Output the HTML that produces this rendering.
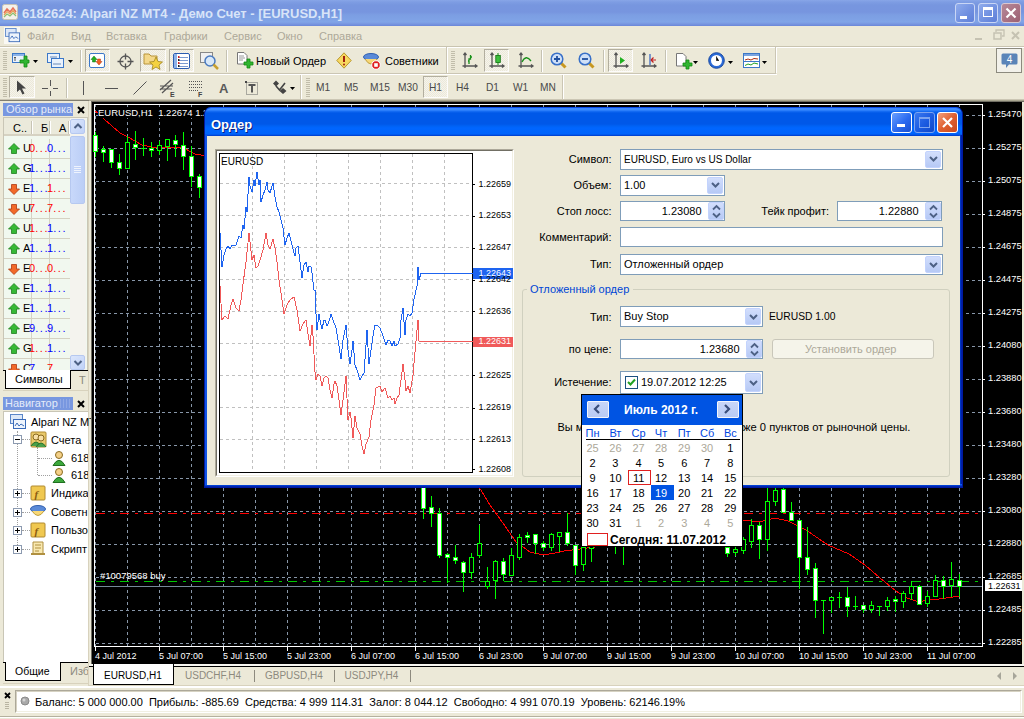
<!DOCTYPE html><html><head><meta charset="utf-8"><style>
html,body{margin:0;padding:0;}
body{width:1024px;height:719px;overflow:hidden;position:relative;background:#ECE9D8;font-family:"Liberation Sans", sans-serif;}
.t{position:absolute;white-space:nowrap;}
.b{position:absolute;box-sizing:border-box;}
svg{position:absolute;overflow:visible;}
</style></head><body>

<div class="b" style="left:0;top:0;width:1024px;height:26px;background:linear-gradient(180deg,#88A6E8 0px,#7E9DE3 2px,#7796DF 5px,#7795DF 12px,#7C9EE3 15px,#80A4E7 22px,#7896E0 24px,#6A86D8 26px);"></div>
<svg style="left:2px;top:4px" width="16" height="16" viewBox="0 0 16 16"><rect x="0.5" y="0.5" width="15" height="15" rx="2" fill="#F4F1EA" stroke="#C9C3B6"/><path d="M2 9 L5 5 L8 8 L11 4 L14 8" stroke="#E87058" stroke-width="1.5" fill="none"/><path d="M2 11 L5 7.5 L8 10 L11 6.5 L14 10" stroke="#E8A058" stroke-width="1.2" fill="none"/><path d="M2 13 L5 10 L8 12 L11 9 L14 12" stroke="#8CC070" stroke-width="1.2" fill="none"/></svg>
<div class="t" style="left:22px;top:5.0px;font-size:13px;line-height:17px;color:#D8E4F8;font-weight:700;">6182624: Alpari NZ MT4 - Демо Счет - [EURUSD,H1]</div>
<div class="b" style="left:955px;top:3px;width:20px;height:20px;border:1px solid #C9D6F5;border-radius:3px;background:linear-gradient(135deg,#90ACEC,#6F8FE0 60%,#5E7FD8);"></div>
<div class="b" style="left:960px;top:16px;width:7px;height:3px;background:#FFF;"></div>
<div class="b" style="left:978px;top:3px;width:20px;height:20px;border:1px solid #C9D6F5;border-radius:3px;background:linear-gradient(135deg,#90ACEC,#6F8FE0 60%,#5E7FD8);"></div>
<div class="b" style="left:983px;top:7px;width:10px;height:10px;border:1px solid #FFF;border-top:3px solid #FFF;"></div>
<div class="b" style="left:1001px;top:3px;width:20px;height:20px;border:1px solid #D9C8D2;border-radius:3px;background:linear-gradient(135deg,#B58A9A,#A87082 60%,#9A6072);"></div>
<svg style="left:1001px;top:3px" width="20" height="20"><path d="M5.5 5.5 L14.5 14.5 M14.5 5.5 L5.5 14.5" stroke="#FFF" stroke-width="2.2"/></svg>
<div class="b" style="left:4px;top:27px;width:16px;height:17px;background:#FAF9F4;"></div>
<svg style="left:5px;top:28px" width="16" height="15" viewBox="0 0 18 17"><rect x="0.5" y="0.5" width="12" height="9" fill="#DDE8F8" stroke="#5A86C8"/><rect x="4.5" y="5.5" width="12" height="10" fill="#EEF4FC" stroke="#3A6AB8"/><path d="M6 12 L8 9 L10 12 L12 10 L15 12" stroke="#3A6AB8" fill="none"/></svg>
<div class="t" style="left:27px;top:28.5px;font-size:11px;line-height:15px;color:#ACA899;font-weight:400;">Файл</div>
<div class="t" style="left:71px;top:28.5px;font-size:11px;line-height:15px;color:#ACA899;font-weight:400;">Вид</div>
<div class="t" style="left:106px;top:28.5px;font-size:11px;line-height:15px;color:#ACA899;font-weight:400;">Вставка</div>
<div class="t" style="left:164px;top:28.5px;font-size:11px;line-height:15px;color:#ACA899;font-weight:400;">Графики</div>
<div class="t" style="left:224px;top:28.5px;font-size:11px;line-height:15px;color:#ACA899;font-weight:400;">Сервис</div>
<div class="t" style="left:277px;top:28.5px;font-size:11px;line-height:15px;color:#ACA899;font-weight:400;">Окно</div>
<div class="t" style="left:319px;top:28.5px;font-size:11px;line-height:15px;color:#ACA899;font-weight:400;">Справка</div>
<svg style="left:970px;top:27px" width="54" height="18"><path d="M5 12 H12" stroke="#C5C2B2" stroke-width="2"/><rect x="24" y="6" width="7" height="6" fill="none" stroke="#C5C2B2" stroke-width="1.5"/><path d="M26 5 V3 H34 V9 H32" fill="none" stroke="#C5C2B2" stroke-width="1.3"/><path d="M42 5 L49 12 M49 5 L42 12" stroke="#C5C2B2" stroke-width="2"/></svg>
<div class="b" style="left:0px;top:46px;width:1024px;height:1px;background:#C9C4B0;"></div>
<div class="b" style="left:0px;top:47px;width:1024px;height:1px;background:#FFFFFF;"></div>
<div class="b" style="left:0px;top:73px;width:776px;height:1px;background:#CBC6B4;"></div>
<div class="b" style="left:0px;top:74px;width:777px;height:1px;background:#FFFFFF;"></div>
<div class="b" style="left:446px;top:47px;width:1px;height:26px;background:#CBC6B4;"></div>
<div class="b" style="left:447px;top:47px;width:1px;height:26px;background:#FFFFFF;"></div>
<div class="b" style="left:775px;top:47px;width:1px;height:26px;background:#CBC6B4;"></div>
<div class="b" style="left:776px;top:47px;width:1px;height:26px;background:#FFFFFF;"></div>
<div class="b" style="left:0px;top:99px;width:1024px;height:1px;background:#CBC6B4;"></div>
<div class="b" style="left:300px;top:75px;width:1px;height:24px;background:#CBC6B4;"></div>
<div class="b" style="left:301px;top:75px;width:1px;height:24px;background:#FFFFFF;"></div>
<div class="b" style="left:562px;top:75px;width:1px;height:24px;background:#CBC6B4;"></div>
<div class="b" style="left:563px;top:75px;width:1px;height:24px;background:#FFFFFF;"></div>
<div class="b" style="left:3px;top:51px;width:4px;height:1px;background:#C1BDAA;"></div><div class="b" style="left:3px;top:53px;width:4px;height:1px;background:#C1BDAA;"></div><div class="b" style="left:3px;top:55px;width:4px;height:1px;background:#C1BDAA;"></div><div class="b" style="left:3px;top:57px;width:4px;height:1px;background:#C1BDAA;"></div><div class="b" style="left:3px;top:59px;width:4px;height:1px;background:#C1BDAA;"></div><div class="b" style="left:3px;top:61px;width:4px;height:1px;background:#C1BDAA;"></div><div class="b" style="left:3px;top:63px;width:4px;height:1px;background:#C1BDAA;"></div><div class="b" style="left:3px;top:65px;width:4px;height:1px;background:#C1BDAA;"></div><div class="b" style="left:3px;top:67px;width:4px;height:1px;background:#C1BDAA;"></div><div class="b" style="left:3px;top:69px;width:4px;height:1px;background:#C1BDAA;"></div>
<div class="b" style="left:451px;top:51px;width:4px;height:1px;background:#C1BDAA;"></div><div class="b" style="left:451px;top:53px;width:4px;height:1px;background:#C1BDAA;"></div><div class="b" style="left:451px;top:55px;width:4px;height:1px;background:#C1BDAA;"></div><div class="b" style="left:451px;top:57px;width:4px;height:1px;background:#C1BDAA;"></div><div class="b" style="left:451px;top:59px;width:4px;height:1px;background:#C1BDAA;"></div><div class="b" style="left:451px;top:61px;width:4px;height:1px;background:#C1BDAA;"></div><div class="b" style="left:451px;top:63px;width:4px;height:1px;background:#C1BDAA;"></div><div class="b" style="left:451px;top:65px;width:4px;height:1px;background:#C1BDAA;"></div><div class="b" style="left:451px;top:67px;width:4px;height:1px;background:#C1BDAA;"></div><div class="b" style="left:451px;top:69px;width:4px;height:1px;background:#C1BDAA;"></div>
<div class="b" style="left:3px;top:78px;width:4px;height:1px;background:#C1BDAA;"></div><div class="b" style="left:3px;top:80px;width:4px;height:1px;background:#C1BDAA;"></div><div class="b" style="left:3px;top:82px;width:4px;height:1px;background:#C1BDAA;"></div><div class="b" style="left:3px;top:84px;width:4px;height:1px;background:#C1BDAA;"></div><div class="b" style="left:3px;top:86px;width:4px;height:1px;background:#C1BDAA;"></div><div class="b" style="left:3px;top:88px;width:4px;height:1px;background:#C1BDAA;"></div><div class="b" style="left:3px;top:90px;width:4px;height:1px;background:#C1BDAA;"></div><div class="b" style="left:3px;top:92px;width:4px;height:1px;background:#C1BDAA;"></div><div class="b" style="left:3px;top:94px;width:4px;height:1px;background:#C1BDAA;"></div><div class="b" style="left:3px;top:96px;width:4px;height:1px;background:#C1BDAA;"></div>
<div class="b" style="left:306px;top:78px;width:4px;height:1px;background:#C1BDAA;"></div><div class="b" style="left:306px;top:80px;width:4px;height:1px;background:#C1BDAA;"></div><div class="b" style="left:306px;top:82px;width:4px;height:1px;background:#C1BDAA;"></div><div class="b" style="left:306px;top:84px;width:4px;height:1px;background:#C1BDAA;"></div><div class="b" style="left:306px;top:86px;width:4px;height:1px;background:#C1BDAA;"></div><div class="b" style="left:306px;top:88px;width:4px;height:1px;background:#C1BDAA;"></div><div class="b" style="left:306px;top:90px;width:4px;height:1px;background:#C1BDAA;"></div><div class="b" style="left:306px;top:92px;width:4px;height:1px;background:#C1BDAA;"></div><div class="b" style="left:306px;top:94px;width:4px;height:1px;background:#C1BDAA;"></div><div class="b" style="left:306px;top:96px;width:4px;height:1px;background:#C1BDAA;"></div>
<svg style="left:12px;top:53px" width="18" height="15" viewBox="0 0 18 15"><rect x="0.5" y="0.5" width="12" height="9" fill="#EAF2FC" stroke="#3C78C8"/><rect x="1" y="1" width="11" height="2" fill="#8DB4E8"/><path d="M3 4 V8 M2 5 L3 4 L4 5" stroke="#555" fill="none"/><path d="M9 6 h4 v-4 h3 v4 h2 v3 h-2 v4 h-3 v-4 h-4 z" transform="translate(-1,1)" fill="#31B531" stroke="#138A13" stroke-width="0.8"/></svg>
<svg style="left:33px;top:60px" width="6" height="4"><path d="M0 0 H5 L2.5 3 Z" fill="#000"/></svg>
<svg style="left:47px;top:53px" width="18" height="15" viewBox="0 0 18 15"><rect x="0.5" y="0.5" width="12" height="9" fill="#EAF2FC" stroke="#3C78C8"/><rect x="4.5" y="5.5" width="12" height="9" fill="#EAF2FC" stroke="#3C78C8"/><path d="M3 4 H10 M6 11 H14" stroke="#6A8AB8" fill="none"/></svg>
<svg style="left:68px;top:60px" width="6" height="4"><path d="M0 0 H5 L2.5 3 Z" fill="#000"/></svg>
<div class="b" style="left:80px;top:50px;width:1px;height:22px;background:#C5C2B2;"></div><div class="b" style="left:81px;top:50px;width:1px;height:22px;background:#FFF;"></div>
<div class="b" style="left:85px;top:49px;width:25px;height:23px;border:1px solid;border-color:#ACA899 #FFFFFF #FFFFFF #ACA899;background-color:#F6F5F0;background-image:linear-gradient(45deg,#ECE9D8 25%,transparent 25%,transparent 75%,#ECE9D8 75%),linear-gradient(45deg,#ECE9D8 25%,transparent 25%,transparent 75%,#ECE9D8 75%);background-size:2px 2px;background-position:0 0,1px 1px;opacity:0.9"></div>
<svg style="left:89px;top:53px" width="16" height="15" viewBox="0 0 16 15"><rect x="0.5" y="0.5" width="15" height="14" rx="1.5" fill="#FFF" stroke="#3C78C8"/><path d="M5 3 L8 6.5 H6.5 V9 H3.5 V6.5 H2 Z" fill="#20B020" stroke="#107010" stroke-width="0.5"/><path d="M10 12 L13 8.5 H11.5 V6 H8.5 V8.5 H7 Z" fill="#F06020" stroke="#B03010" stroke-width="0.5"/></svg>
<svg style="left:117px;top:53px" width="17" height="17" viewBox="0 0 17 17"><circle cx="8.5" cy="8.5" r="5.5" fill="none" stroke="#555" stroke-width="1.3"/><path d="M8.5 0.5 V6.5 M8.5 10.5 V16.5 M0.5 8.5 H6.5 M10.5 8.5 H16.5" stroke="#555" stroke-width="1.3"/></svg>
<div class="b" style="left:140px;top:49px;width:26px;height:23px;border:1px solid;border-color:#ACA899 #FFFFFF #FFFFFF #ACA899;background-color:#F6F5F0;background-image:linear-gradient(45deg,#ECE9D8 25%,transparent 25%,transparent 75%,#ECE9D8 75%),linear-gradient(45deg,#ECE9D8 25%,transparent 25%,transparent 75%,#ECE9D8 75%);background-size:2px 2px;background-position:0 0,1px 1px;opacity:0.9"></div>
<svg style="left:143px;top:51px" width="20" height="19" viewBox="0 0 20 19"><path d="M1 3 H6 L8 5 H14 V13 H1 Z" fill="#F4D88A" stroke="#B8943A"/><path d="M13 6 L15 10.5 L19.5 11 L16 14 L17 18.5 L13 16 L9 18.5 L10 14 L6.5 11 L11 10.5 Z" fill="#F4D240" stroke="#A08420" stroke-width="0.8"/></svg>
<div class="b" style="left:169px;top:49px;width:25px;height:23px;border:1px solid;border-color:#ACA899 #FFFFFF #FFFFFF #ACA899;background-color:#F6F5F0;background-image:linear-gradient(45deg,#ECE9D8 25%,transparent 25%,transparent 75%,#ECE9D8 75%),linear-gradient(45deg,#ECE9D8 25%,transparent 25%,transparent 75%,#ECE9D8 75%);background-size:2px 2px;background-position:0 0,1px 1px;opacity:0.9"></div>
<svg style="left:173px;top:53px" width="17" height="16" viewBox="0 0 17 16"><rect x="0.5" y="0.5" width="16" height="15" rx="1.5" fill="#FFF" stroke="#2A5CB0"/><rect x="1" y="1" width="3" height="14" fill="#8EB2E8"/><path d="M6 4.5 H15 M6 7.5 H15 M6 10.5 H15 M6 13.5 H15" stroke="#7A9AD0"/><rect x="5" y="3" width="1.5" height="2" fill="#D02020"/><rect x="5" y="9" width="1.5" height="2" fill="#D02020"/><rect x="5" y="6" width="1.5" height="2" fill="#202020"/><rect x="5" y="12" width="1.5" height="2" fill="#202020"/></svg>
<svg style="left:200px;top:52px" width="20" height="18" viewBox="0 0 20 18"><rect x="0.5" y="0.5" width="12" height="10" fill="#F0F0F0" stroke="#888"/><circle cx="10" cy="9" r="5" fill="#D8E8F8" stroke="#4A7AC0" stroke-width="1.5"/><path d="M13.5 12.5 L18 17" stroke="#C8A030" stroke-width="2.5"/></svg>
<div class="b" style="left:226px;top:50px;width:1px;height:22px;background:#C5C2B2;"></div><div class="b" style="left:227px;top:50px;width:1px;height:22px;background:#FFF;"></div>
<svg style="left:236px;top:52px" width="17" height="18" viewBox="0 0 17 18"><path d="M1.5 0.5 H8 L11 3.5 V12 H1.5 Z" fill="#FFF" stroke="#777"/><path d="M3 4 H8 M3 6 H9 M3 8 H7" stroke="#999"/><path d="M8 10 h3 v-3 h3 v3 h3 v3 h-3 v3 h-3 v-3 h-3 z" fill="#31B531" stroke="#138A13" stroke-width="0.8"/></svg>
<div class="t" style="left:256px;top:53.5px;font-size:11px;line-height:15px;color:#000;font-weight:400;">Новый Ордер</div>
<svg style="left:336px;top:52px" width="16" height="17" viewBox="0 0 16 17"><path d="M8 0.8 L15.2 8.5 L8 16.2 L0.8 8.5 Z" fill="#F8D860" stroke="#B89830"/><path d="M8 4 V10" stroke="#A02010" stroke-width="2"/><circle cx="8" cy="12.5" r="1" fill="#A02010"/></svg>
<svg style="left:363px;top:52px" width="18" height="18" viewBox="0 0 18 18"><ellipse cx="8" cy="5" rx="7.5" ry="3.5" fill="#5A8AD8" stroke="#3060B0"/><path d="M2 7 Q8 17 14 7" fill="#F8D878" stroke="#C0A040"/><circle cx="13" cy="13" r="4.3" fill="#E02020" stroke="#FFF"/><rect x="11.2" y="11.2" width="3.6" height="3.6" fill="#FFF"/></svg>
<div class="t" style="left:385px;top:53.5px;font-size:11px;line-height:15px;color:#000;font-weight:400;">Советники</div>
<svg style="left:462px;top:52px" width="16" height="18" viewBox="0 0 16 18"><path d="M3 1 V16 M0.5 14 H15 M1.5 3 L3 1 L4.5 3 M13 12.5 L15 14 L13 15.5" stroke="#555" stroke-width="1.3" fill="none"/><path d="M7 12 V7 H8.5 V3 M6 9 H7 M8.5 5 H10" stroke="#189018" stroke-width="1.3" fill="none"/></svg>
<div class="b" style="left:484px;top:49px;width:25px;height:23px;border:1px solid;border-color:#ACA899 #FFFFFF #FFFFFF #ACA899;background-color:#F6F5F0;background-image:linear-gradient(45deg,#ECE9D8 25%,transparent 25%,transparent 75%,#ECE9D8 75%),linear-gradient(45deg,#ECE9D8 25%,transparent 25%,transparent 75%,#ECE9D8 75%);background-size:2px 2px;background-position:0 0,1px 1px;opacity:0.9"></div>
<svg style="left:489px;top:52px" width="16" height="18" viewBox="0 0 16 18"><path d="M3 1 V16 M0.5 14 H15 M1.5 3 L3 1 L4.5 3 M13 12.5 L15 14 L13 15.5" stroke="#555" stroke-width="1.3" fill="none"/><path d="M9 1 V13" stroke="#189018"/><rect x="6.8" y="3.5" width="4.5" height="7" fill="#3CC03C" stroke="#107010" stroke-width="0.8"/></svg>
<svg style="left:518px;top:52px" width="16" height="18" viewBox="0 0 16 18"><path d="M3 1 V16 M0.5 14 H15 M1.5 3 L3 1 L4.5 3 M13 12.5 L15 14 L13 15.5" stroke="#555" stroke-width="1.3" fill="none"/><path d="M4 10 Q8 2 13 9" stroke="#189018" stroke-width="1.3" fill="none"/></svg>
<div class="b" style="left:541px;top:50px;width:1px;height:22px;background:#C5C2B2;"></div><div class="b" style="left:542px;top:50px;width:1px;height:22px;background:#FFF;"></div>
<svg style="left:550px;top:52px" width="17" height="18" viewBox="0 0 17 18"><path d="M10 10 L15.5 15.5" stroke="#C89820" stroke-width="3"/><circle cx="7" cy="7" r="5.8" fill="#CFE0F8" stroke="#3870C8" stroke-width="1.5"/><path d="M4 7 H10 M7 4 V10" stroke="#2050A0" stroke-width="1.8"/></svg>
<svg style="left:578px;top:52px" width="17" height="18" viewBox="0 0 17 18"><path d="M10 10 L15.5 15.5" stroke="#C89820" stroke-width="3"/><circle cx="7" cy="7" r="5.8" fill="#CFE0F8" stroke="#3870C8" stroke-width="1.5"/><path d="M4 7 H10" stroke="#2050A0" stroke-width="1.8"/></svg>
<div class="b" style="left:603px;top:50px;width:1px;height:22px;background:#C5C2B2;"></div><div class="b" style="left:604px;top:50px;width:1px;height:22px;background:#FFF;"></div>
<div class="b" style="left:608px;top:49px;width:25px;height:23px;border:1px solid;border-color:#ACA899 #FFFFFF #FFFFFF #ACA899;background-color:#F6F5F0;background-image:linear-gradient(45deg,#ECE9D8 25%,transparent 25%,transparent 75%,#ECE9D8 75%),linear-gradient(45deg,#ECE9D8 25%,transparent 25%,transparent 75%,#ECE9D8 75%);background-size:2px 2px;background-position:0 0,1px 1px;opacity:0.9"></div>
<svg style="left:613px;top:52px" width="16" height="18" viewBox="0 0 16 18"><path d="M3 1 V16 M0.5 14 H15 M1.5 3 L3 1 L4.5 3 M13 12.5 L15 14 L13 15.5" stroke="#555" stroke-width="1.3" fill="none"/><path d="M7 5 L12 8.5 L7 12 Z" fill="#20B020"/></svg>
<svg style="left:641px;top:52px" width="16" height="18" viewBox="0 0 16 18"><path d="M3 1 V16 M0.5 14 H15 M1.5 3 L3 1 L4.5 3 M13 12.5 L15 14 L13 15.5" stroke="#555" stroke-width="1.3" fill="none"/><path d="M9 2 V13" stroke="#3060C0" stroke-width="1.2"/><path d="M10 8 L15 8 M10 8 L12.5 5.5 M10 8 L12.5 10.5" stroke="#C02020" stroke-width="1.2"/></svg>
<div class="b" style="left:665px;top:50px;width:1px;height:22px;background:#C5C2B2;"></div><div class="b" style="left:666px;top:50px;width:1px;height:22px;background:#FFF;"></div>
<svg style="left:675px;top:53px" width="18" height="18" viewBox="0 0 18 18"><path d="M1.5 0.5 H8 L11 3.5 V13 H1.5 Z" fill="#FFF" stroke="#777"/><path d="M8 10 h3 v-3 h3 v3 h3 v3 h-3 v3 h-3 v-3 h-3 z" fill="#31B531" stroke="#138A13" stroke-width="0.8"/></svg>
<svg style="left:693px;top:61px" width="6" height="4"><path d="M0 0 H5 L2.5 3 Z" fill="#000"/></svg>
<svg style="left:708px;top:52px" width="17" height="17" viewBox="0 0 17 17"><circle cx="8.5" cy="8.5" r="7.8" fill="#2A6AD8" stroke="#1A4AA0"/><circle cx="8.5" cy="8.5" r="5.5" fill="#FFF"/><path d="M8.5 4.5 V8.5 H11" stroke="#333" stroke-width="1"/></svg>
<svg style="left:728px;top:61px" width="6" height="4"><path d="M0 0 H5 L2.5 3 Z" fill="#000"/></svg>
<svg style="left:743px;top:53px" width="17" height="15" viewBox="0 0 17 15"><rect x="0.5" y="0.5" width="16" height="14" fill="#FFF" stroke="#3C78C8"/><rect x="1" y="1" width="15" height="2" fill="#7AA4E0"/><path d="M2 7 L5 6 L8 7 L11 5.5 L15 6" stroke="#B03010" fill="none"/><path d="M1 8.5 H16" stroke="#3C78C8"/><path d="M2 12.5 L5 11 L8 12 L11 10 L15 11" stroke="#20A020" fill="none"/></svg>
<svg style="left:762px;top:61px" width="6" height="4"><path d="M0 0 H5 L2.5 3 Z" fill="#000"/></svg>
<div class="b" style="left:996px;top:48px;width:26px;height:25px;border:1px solid #8C8A7E;background:#F2F1EA;"></div>
<svg style="left:1001px;top:53px" width="17" height="16" viewBox="0 0 17 16"><path d="M2 0.5 H15 Q16.5 0.5 16.5 2 V10 Q16.5 11.5 15 11.5 H8 L5 15 V11.5 H2 Q0.5 11.5 0.5 10 V2 Q0.5 0.5 2 0.5 Z" fill="#5A84B8"/><text x="8.5" y="9.5" font-size="10" font-family="Liberation Sans" fill="#FFF" text-anchor="middle">4</text></svg>
<div class="b" style="left:9px;top:76px;width:26px;height:22px;border:1px solid;border-color:#ACA899 #FFFFFF #FFFFFF #ACA899;background-color:#F6F5F0;background-image:linear-gradient(45deg,#ECE9D8 25%,transparent 25%,transparent 75%,#ECE9D8 75%),linear-gradient(45deg,#ECE9D8 25%,transparent 25%,transparent 75%,#ECE9D8 75%);background-size:2px 2px;background-position:0 0,1px 1px;opacity:0.9"></div>
<svg style="left:16px;top:80px" width="11" height="15" viewBox="0 0 11 15"><path d="M1 0.5 L1 12 L4 9.5 L6.5 14.5 L8.5 13.5 L6 8.5 L10 8.5 Z" fill="#444"/></svg>
<svg style="left:42px;top:80px" width="16" height="16"><path d="M8.5 0 V6 M8.5 11 V16 M0 8.5 H6 M11 8.5 H16" stroke="#555" stroke-width="1"/></svg>
<div class="b" style="left:66px;top:78px;width:1px;height:20px;background:#C5C2B2;"></div><div class="b" style="left:67px;top:78px;width:1px;height:20px;background:#FFF;"></div>
<div class="b" style="left:83px;top:81px;width:1px;height:14px;background:#555;"></div>
<div class="b" style="left:105px;top:88px;width:13px;height:1px;background:#555;"></div>
<svg style="left:133px;top:81px" width="14" height="14"><path d="M0.5 13.5 L13.5 0.5" stroke="#555" stroke-width="1"/></svg>
<svg style="left:159px;top:79px" width="17" height="18" viewBox="0 0 17 18"><path d="M1 11 L12 1 M3 14 L14 4 M1 7 H14 M1 10 H13" stroke="#555" stroke-width="1.2"/><text x="11" y="17.5" font-size="7" font-weight="700" font-family="Liberation Sans" fill="#444">E</text></svg>
<svg style="left:188px;top:80px" width="16" height="17" viewBox="0 0 16 17"><path d="M1 1.5 H14 M1 4.5 H14 M1 7.5 H14 M1 10.5 H10" stroke="#555" stroke-dasharray="1,1"/><text x="10" y="16.5" font-size="7" font-weight="700" font-family="Liberation Sans" fill="#444">F</text></svg>
<div class="t" style="left:219px;top:80.0px;font-size:13px;line-height:17px;color:#5A5A5A;font-weight:700;">A</div>
<svg style="left:245px;top:81px" width="13" height="14" viewBox="0 0 13 14"><rect x="1.5" y="1.5" width="11" height="12" fill="none" stroke="#666" stroke-dasharray="1,1"/><rect x="0" y="0" width="2" height="2" fill="#444"/><path d="M3.5 4 H10.5 M7 4 V11.5" stroke="#555" stroke-width="2"/></svg>
<svg style="left:272px;top:80px" width="16" height="15" viewBox="0 0 16 15"><path d="M4 0.5 L7 3.5 L4 6.5 L1 3.5 Z M11 8 L14.5 11 L11 14 L7.5 11 Z" fill="#444"/><path d="M4 6 L7.5 10 L13 3" stroke="#444" stroke-width="1.6" fill="none"/></svg>
<svg style="left:290px;top:87px" width="6" height="4"><path d="M0 0 H5 L2.5 3 Z" fill="#000"/></svg>
<div class="t" style="left:316px;top:80.9px;font-size:10.2px;line-height:14.2px;color:#4A4A4A;font-weight:400;">M1</div>
<div class="t" style="left:344px;top:80.9px;font-size:10.2px;line-height:14.2px;color:#4A4A4A;font-weight:400;">M5</div>
<div class="t" style="left:370px;top:80.9px;font-size:10.2px;line-height:14.2px;color:#4A4A4A;font-weight:400;">M15</div>
<div class="t" style="left:398px;top:80.9px;font-size:10.2px;line-height:14.2px;color:#4A4A4A;font-weight:400;">M30</div>
<div class="b" style="left:423px;top:76px;width:25px;height:22px;border:1px solid;border-color:#ACA899 #FFFFFF #FFFFFF #ACA899;background-color:#F6F5F0;background-image:linear-gradient(45deg,#ECE9D8 25%,transparent 25%,transparent 75%,#ECE9D8 75%),linear-gradient(45deg,#ECE9D8 25%,transparent 25%,transparent 75%,#ECE9D8 75%);background-size:2px 2px;background-position:0 0,1px 1px;opacity:0.9"></div>
<div class="t" style="left:429px;top:80.9px;font-size:10.2px;line-height:14.2px;color:#4A4A4A;font-weight:400;">H1</div>
<div class="t" style="left:456px;top:80.9px;font-size:10.2px;line-height:14.2px;color:#4A4A4A;font-weight:400;">H4</div>
<div class="t" style="left:486px;top:80.9px;font-size:10.2px;line-height:14.2px;color:#4A4A4A;font-weight:400;">D1</div>
<div class="t" style="left:513px;top:80.9px;font-size:10.2px;line-height:14.2px;color:#4A4A4A;font-weight:400;">W1</div>
<div class="t" style="left:540px;top:80.9px;font-size:10.2px;line-height:14.2px;color:#4A4A4A;font-weight:400;">MN</div>
<div class="b" style="left:0px;top:100px;width:1024px;height:1px;background:#807D70;"></div>
<div class="b" style="left:88px;top:101px;width:1px;height:585px;background:#D8D2BD;"></div>
<div class="b" style="left:3px;top:103px;width:70px;height:13px;background:#7897E0;"></div>
<div class="b" style="left:3px;top:103px;width:70px;height:13px;overflow:hidden;"><div class="t" style="left:3px;top:-1px;font-size:11px;line-height:14px;color:#E4EBF9;">Обзор рынка</div></div>
<svg style="left:77px;top:106px" width="8" height="8"><path d="M1 1 L7 7 M7 1 L1 7" stroke="#000" stroke-width="2"/></svg>
<div class="b" style="left:3px;top:117px;width:85px;height:254px;background:#F1F8EF;border:1px solid #C9C6B6;"></div>
<div class="b" style="left:4px;top:118px;width:66px;height:18px;background:#EBEADB;border-bottom:2px solid #D6D2C2;"></div>
<div class="b" style="left:31px;top:121px;width:1px;height:13px;background:#FFFFFF;border-left:1px solid #C7C4B4;width:2px;"></div>
<div class="b" style="left:49px;top:121px;width:1px;height:13px;background:#FFFFFF;border-left:1px solid #C7C4B4;width:2px;"></div>
<div class="b" style="left:68px;top:121px;width:1px;height:13px;background:#FFFFFF;border-left:1px solid #C7C4B4;width:2px;"></div>
<div class="t" style="left:13px;top:120.5px;font-size:11px;line-height:15px;color:#000;font-weight:400;">С..</div>
<div class="t" style="left:41px;top:120.5px;font-size:11px;line-height:15px;color:#000;font-weight:400;">Б</div>
<div class="t" style="left:59px;top:120.5px;font-size:11px;line-height:15px;color:#000;font-weight:400;">А</div>
<div class="b" style="left:4px;top:158px;width:66px;height:1px;background:#D5D2C3;"></div>
<div class="b" style="left:31px;top:139px;width:1px;height:19px;background:#D5D2C3;"></div>
<div class="b" style="left:49px;top:139px;width:1px;height:19px;background:#D5D2C3;"></div>
<svg style="left:8px;top:143px" width="12" height="11" viewBox="0 0 12 11"><path d="M6 0.5 L11.5 6 H8.5 V10.5 H3.5 V6 H0.5 Z" fill="#36B836" stroke="#1F7F1F" stroke-width="0.8"/></svg>
<div class="t" style="left:23px;top:140.5px;font-size:11px;line-height:15px;color:#000;font-weight:400;">U</div>
<div class="t" style="left:29px;top:140.5px;font-size:11px;line-height:15px;color:#FF0000;font-weight:400;">0<span style="letter-spacing:1.6px">...</span></div>
<div class="t" style="left:47px;top:140.5px;font-size:11px;line-height:15px;color:#0000FF;font-weight:400;">0<span style="letter-spacing:1.6px">...</span></div>
<div class="b" style="left:4px;top:178px;width:66px;height:1px;background:#D5D2C3;"></div>
<div class="b" style="left:31px;top:159px;width:1px;height:19px;background:#D5D2C3;"></div>
<div class="b" style="left:49px;top:159px;width:1px;height:19px;background:#D5D2C3;"></div>
<svg style="left:8px;top:163px" width="12" height="11" viewBox="0 0 12 11"><path d="M6 0.5 L11.5 6 H8.5 V10.5 H3.5 V6 H0.5 Z" fill="#36B836" stroke="#1F7F1F" stroke-width="0.8"/></svg>
<div class="t" style="left:23px;top:160.5px;font-size:11px;line-height:15px;color:#000;font-weight:400;">G</div>
<div class="t" style="left:29px;top:160.5px;font-size:11px;line-height:15px;color:#0000FF;font-weight:400;">1<span style="letter-spacing:1.6px">...</span></div>
<div class="t" style="left:47px;top:160.5px;font-size:11px;line-height:15px;color:#0000FF;font-weight:400;">1<span style="letter-spacing:1.6px">...</span></div>
<div class="b" style="left:4px;top:198px;width:66px;height:1px;background:#D5D2C3;"></div>
<div class="b" style="left:31px;top:179px;width:1px;height:19px;background:#D5D2C3;"></div>
<div class="b" style="left:49px;top:179px;width:1px;height:19px;background:#D5D2C3;"></div>
<svg style="left:8px;top:184px" width="12" height="11" viewBox="0 0 12 11"><path d="M6 10.5 L11.5 5 H8.5 V0.5 H3.5 V5 H0.5 Z" fill="#F26A2A" stroke="#B03A10" stroke-width="0.8"/></svg>
<div class="t" style="left:23px;top:180.5px;font-size:11px;line-height:15px;color:#000;font-weight:400;">E</div>
<div class="t" style="left:29px;top:180.5px;font-size:11px;line-height:15px;color:#0000FF;font-weight:400;">1<span style="letter-spacing:1.6px">...</span></div>
<div class="t" style="left:47px;top:180.5px;font-size:11px;line-height:15px;color:#FF0000;font-weight:400;">1<span style="letter-spacing:1.6px">...</span></div>
<div class="b" style="left:4px;top:218px;width:66px;height:1px;background:#D5D2C3;"></div>
<div class="b" style="left:31px;top:199px;width:1px;height:19px;background:#D5D2C3;"></div>
<div class="b" style="left:49px;top:199px;width:1px;height:19px;background:#D5D2C3;"></div>
<svg style="left:8px;top:204px" width="12" height="11" viewBox="0 0 12 11"><path d="M6 10.5 L11.5 5 H8.5 V0.5 H3.5 V5 H0.5 Z" fill="#F26A2A" stroke="#B03A10" stroke-width="0.8"/></svg>
<div class="t" style="left:23px;top:200.5px;font-size:11px;line-height:15px;color:#000;font-weight:400;">U</div>
<div class="t" style="left:29px;top:200.5px;font-size:11px;line-height:15px;color:#FF0000;font-weight:400;">7<span style="letter-spacing:1.6px">...</span></div>
<div class="t" style="left:47px;top:200.5px;font-size:11px;line-height:15px;color:#FF0000;font-weight:400;">7<span style="letter-spacing:1.6px">...</span></div>
<div class="b" style="left:4px;top:238px;width:66px;height:1px;background:#D5D2C3;"></div>
<div class="b" style="left:31px;top:219px;width:1px;height:19px;background:#D5D2C3;"></div>
<div class="b" style="left:49px;top:219px;width:1px;height:19px;background:#D5D2C3;"></div>
<svg style="left:8px;top:223px" width="12" height="11" viewBox="0 0 12 11"><path d="M6 0.5 L11.5 6 H8.5 V10.5 H3.5 V6 H0.5 Z" fill="#36B836" stroke="#1F7F1F" stroke-width="0.8"/></svg>
<div class="t" style="left:23px;top:220.5px;font-size:11px;line-height:15px;color:#000;font-weight:400;">U</div>
<div class="t" style="left:29px;top:220.5px;font-size:11px;line-height:15px;color:#FF0000;font-weight:400;">1<span style="letter-spacing:1.6px">...</span></div>
<div class="t" style="left:47px;top:220.5px;font-size:11px;line-height:15px;color:#0000FF;font-weight:400;">1<span style="letter-spacing:1.6px">...</span></div>
<div class="b" style="left:4px;top:258px;width:66px;height:1px;background:#D5D2C3;"></div>
<div class="b" style="left:31px;top:239px;width:1px;height:19px;background:#D5D2C3;"></div>
<div class="b" style="left:49px;top:239px;width:1px;height:19px;background:#D5D2C3;"></div>
<svg style="left:8px;top:243px" width="12" height="11" viewBox="0 0 12 11"><path d="M6 0.5 L11.5 6 H8.5 V10.5 H3.5 V6 H0.5 Z" fill="#36B836" stroke="#1F7F1F" stroke-width="0.8"/></svg>
<div class="t" style="left:23px;top:240.5px;font-size:11px;line-height:15px;color:#000;font-weight:400;">A</div>
<div class="t" style="left:29px;top:240.5px;font-size:11px;line-height:15px;color:#0000FF;font-weight:400;">1<span style="letter-spacing:1.6px">...</span></div>
<div class="t" style="left:47px;top:240.5px;font-size:11px;line-height:15px;color:#0000FF;font-weight:400;">1<span style="letter-spacing:1.6px">...</span></div>
<div class="b" style="left:4px;top:278px;width:66px;height:1px;background:#D5D2C3;"></div>
<div class="b" style="left:31px;top:259px;width:1px;height:19px;background:#D5D2C3;"></div>
<div class="b" style="left:49px;top:259px;width:1px;height:19px;background:#D5D2C3;"></div>
<svg style="left:8px;top:264px" width="12" height="11" viewBox="0 0 12 11"><path d="M6 10.5 L11.5 5 H8.5 V0.5 H3.5 V5 H0.5 Z" fill="#F26A2A" stroke="#B03A10" stroke-width="0.8"/></svg>
<div class="t" style="left:23px;top:260.5px;font-size:11px;line-height:15px;color:#000;font-weight:400;">E</div>
<div class="t" style="left:29px;top:260.5px;font-size:11px;line-height:15px;color:#FF0000;font-weight:400;">0<span style="letter-spacing:1.6px">...</span></div>
<div class="t" style="left:47px;top:260.5px;font-size:11px;line-height:15px;color:#FF0000;font-weight:400;">0<span style="letter-spacing:1.6px">...</span></div>
<div class="b" style="left:4px;top:298px;width:66px;height:1px;background:#D5D2C3;"></div>
<div class="b" style="left:31px;top:279px;width:1px;height:19px;background:#D5D2C3;"></div>
<div class="b" style="left:49px;top:279px;width:1px;height:19px;background:#D5D2C3;"></div>
<svg style="left:8px;top:283px" width="12" height="11" viewBox="0 0 12 11"><path d="M6 0.5 L11.5 6 H8.5 V10.5 H3.5 V6 H0.5 Z" fill="#36B836" stroke="#1F7F1F" stroke-width="0.8"/></svg>
<div class="t" style="left:23px;top:280.5px;font-size:11px;line-height:15px;color:#000;font-weight:400;">E</div>
<div class="t" style="left:29px;top:280.5px;font-size:11px;line-height:15px;color:#0000FF;font-weight:400;">1<span style="letter-spacing:1.6px">...</span></div>
<div class="t" style="left:47px;top:280.5px;font-size:11px;line-height:15px;color:#0000FF;font-weight:400;">1<span style="letter-spacing:1.6px">...</span></div>
<div class="b" style="left:4px;top:318px;width:66px;height:1px;background:#D5D2C3;"></div>
<div class="b" style="left:31px;top:299px;width:1px;height:19px;background:#D5D2C3;"></div>
<div class="b" style="left:49px;top:299px;width:1px;height:19px;background:#D5D2C3;"></div>
<svg style="left:8px;top:303px" width="12" height="11" viewBox="0 0 12 11"><path d="M6 0.5 L11.5 6 H8.5 V10.5 H3.5 V6 H0.5 Z" fill="#36B836" stroke="#1F7F1F" stroke-width="0.8"/></svg>
<div class="t" style="left:23px;top:300.5px;font-size:11px;line-height:15px;color:#000;font-weight:400;">E</div>
<div class="t" style="left:29px;top:300.5px;font-size:11px;line-height:15px;color:#0000FF;font-weight:400;">1<span style="letter-spacing:1.6px">...</span></div>
<div class="t" style="left:47px;top:300.5px;font-size:11px;line-height:15px;color:#0000FF;font-weight:400;">1<span style="letter-spacing:1.6px">...</span></div>
<div class="b" style="left:4px;top:338px;width:66px;height:1px;background:#D5D2C3;"></div>
<div class="b" style="left:31px;top:319px;width:1px;height:19px;background:#D5D2C3;"></div>
<div class="b" style="left:49px;top:319px;width:1px;height:19px;background:#D5D2C3;"></div>
<svg style="left:8px;top:323px" width="12" height="11" viewBox="0 0 12 11"><path d="M6 0.5 L11.5 6 H8.5 V10.5 H3.5 V6 H0.5 Z" fill="#36B836" stroke="#1F7F1F" stroke-width="0.8"/></svg>
<div class="t" style="left:23px;top:320.5px;font-size:11px;line-height:15px;color:#000;font-weight:400;">E</div>
<div class="t" style="left:29px;top:320.5px;font-size:11px;line-height:15px;color:#0000FF;font-weight:400;">9<span style="letter-spacing:1.6px">...</span></div>
<div class="t" style="left:47px;top:320.5px;font-size:11px;line-height:15px;color:#0000FF;font-weight:400;">9<span style="letter-spacing:1.6px">...</span></div>
<div class="b" style="left:4px;top:358px;width:66px;height:1px;background:#D5D2C3;"></div>
<div class="b" style="left:31px;top:339px;width:1px;height:19px;background:#D5D2C3;"></div>
<div class="b" style="left:49px;top:339px;width:1px;height:19px;background:#D5D2C3;"></div>
<svg style="left:8px;top:343px" width="12" height="11" viewBox="0 0 12 11"><path d="M6 0.5 L11.5 6 H8.5 V10.5 H3.5 V6 H0.5 Z" fill="#36B836" stroke="#1F7F1F" stroke-width="0.8"/></svg>
<div class="t" style="left:23px;top:340.5px;font-size:11px;line-height:15px;color:#000;font-weight:400;">G</div>
<div class="t" style="left:29px;top:340.5px;font-size:11px;line-height:15px;color:#FF0000;font-weight:400;">1<span style="letter-spacing:1.6px">...</span></div>
<div class="t" style="left:47px;top:340.5px;font-size:11px;line-height:15px;color:#0000FF;font-weight:400;">1<span style="letter-spacing:1.6px">...</span></div>
<div class="b" style="left:4px;top:378px;width:66px;height:1px;background:#D5D2C3;"></div>
<div class="b" style="left:31px;top:359px;width:1px;height:19px;background:#D5D2C3;"></div>
<div class="b" style="left:49px;top:359px;width:1px;height:19px;background:#D5D2C3;"></div>
<svg style="left:8px;top:364px" width="12" height="11" viewBox="0 0 12 11"><path d="M6 10.5 L11.5 5 H8.5 V0.5 H3.5 V5 H0.5 Z" fill="#F26A2A" stroke="#B03A10" stroke-width="0.8"/></svg>
<div class="t" style="left:23px;top:360.5px;font-size:11px;line-height:15px;color:#000;font-weight:400;">C</div>
<div class="t" style="left:29px;top:360.5px;font-size:11px;line-height:15px;color:#0000FF;font-weight:400;">7<span style="letter-spacing:1.6px">...</span></div>
<div class="t" style="left:47px;top:360.5px;font-size:11px;line-height:15px;color:#FF0000;font-weight:400;">7<span style="letter-spacing:1.6px">...</span></div>
<div class="b" style="left:4px;top:370px;width:84px;height:21px;background:#ECE9D8;"></div>
<div class="b" style="left:70px;top:118px;width:16px;height:252px;background:#F4F3EE;"></div>
<div class="b" style="left:70px;top:119px;width:15px;height:15px;border:1px solid #B6C8F0;border-radius:2px;background:linear-gradient(135deg,#DCE6FC,#C0D2F8);"></div>
<svg style="left:73px;top:122px" width="10" height="8"><path d="M1.5 6 L5 2.5 L8.5 6" stroke="#4D6185" stroke-width="2" fill="none"/></svg>
<div class="b" style="left:70px;top:136px;width:15px;height:68px;border:1px solid #B6C8F0;border-radius:2px;background:linear-gradient(90deg,#C8D8FA,#BBCEF6);"></div>
<div class="b" style="left:74px;top:166px;width:7px;height:1px;background:#EEF3FD;"></div><div class="b" style="left:74px;top:168px;width:7px;height:1px;background:#EEF3FD;"></div><div class="b" style="left:74px;top:170px;width:7px;height:1px;background:#EEF3FD;"></div><div class="b" style="left:74px;top:172px;width:7px;height:1px;background:#EEF3FD;"></div>
<div class="b" style="left:70px;top:355px;width:15px;height:15px;border:1px solid #B6C8F0;border-radius:2px;background:linear-gradient(135deg,#DCE6FC,#C0D2F8);"></div>
<svg style="left:73px;top:359px" width="10" height="8"><path d="M1.5 2 L5 5.5 L8.5 2" stroke="#4D6185" stroke-width="2" fill="none"/></svg>
<div class="b" style="left:3px;top:370px;width:85px;height:1px;background:#000;"></div>
<div class="b" style="left:5px;top:370px;width:66px;height:19px;background:#FFF;border:1px solid #000;border-top:none;"></div>
<div class="t" style="left:15px;top:371.5px;font-size:11px;line-height:15px;color:#000;font-weight:400;">Символы</div>
<div class="t" style="left:79px;top:372.5px;font-size:11px;line-height:15px;color:#8D8A7E;font-weight:400;">Т</div>
<div class="b" style="left:3px;top:390px;width:85px;height:1px;background:#D8D2BD;"></div>
<div class="b" style="left:3px;top:397px;width:70px;height:13px;background:#7897E0;"></div>
<div class="b" style="left:3px;top:397px;width:70px;height:13px;overflow:hidden;"><div class="t" style="left:2px;top:-1px;font-size:11px;line-height:14px;color:#E4EBF9;">Навигатор</div></div>
<div class="b" style="left:60px;top:399px;width:12px;height:9px;background:repeating-linear-gradient(90deg,#9AB0E8 0 1px,transparent 1px 3px);opacity:0.7"></div>
<svg style="left:77px;top:400px" width="8" height="8"><path d="M1 1 L7 7 M7 1 L1 7" stroke="#000" stroke-width="2"/></svg>
<div class="b" style="left:3px;top:411px;width:85px;height:251px;background:#FFF;border-left:1px solid #C9C6B6;border-top:1px solid #C9C6B6;"></div>
<div class="b" style="left:17px;top:431px;width:1px;height:118px;border-left:1px dotted #A0A0A0;"></div>
<div class="b" style="left:37px;top:447px;width:1px;height:28px;border-left:1px dotted #A0A0A0;"></div>
<div class="b" style="left:38px;top:458px;width:14px;height:1px;border-top:1px dotted #A0A0A0;"></div>
<div class="b" style="left:38px;top:475px;width:14px;height:1px;border-top:1px dotted #A0A0A0;"></div>
<div class="b" style="left:22px;top:439px;width:8px;height:1px;border-top:1px dotted #A0A0A0;"></div>
<div class="b" style="left:22px;top:493px;width:8px;height:1px;border-top:1px dotted #A0A0A0;"></div>
<div class="b" style="left:22px;top:512px;width:8px;height:1px;border-top:1px dotted #A0A0A0;"></div>
<div class="b" style="left:22px;top:530px;width:8px;height:1px;border-top:1px dotted #A0A0A0;"></div>
<div class="b" style="left:22px;top:549px;width:8px;height:1px;border-top:1px dotted #A0A0A0;"></div>
<svg style="left:10px;top:414px" width="17" height="16" viewBox="0 0 17 16"><rect x="0.5" y="0.5" width="12" height="9" fill="#DDE8F8" stroke="#5A86C8"/><rect x="3.5" y="5.5" width="12" height="9" fill="#EEF4FC" stroke="#3A6AB8"/><path d="M5 12 L7 9 L9 12 L11 10 L14 12" stroke="#3A6AB8" fill="none"/></svg>
<div class="t" style="left:31px;top:414.5px;font-size:11px;line-height:15px;color:#000;font-weight:400;">Alpari NZ MT</div>
<div class="b" style="left:13px;top:435px;width:9px;height:9px;background:#FFF;border:1px solid #8C9AB0;"></div><div class="b" style="left:15px;top:439px;width:5px;height:1px;background:#000;"></div>
<svg style="left:29px;top:431px" width="18" height="17" viewBox="0 0 18 17"><rect x="2" y="1" width="15" height="15" rx="1" fill="#E8C86A" stroke="#B08A30"/><circle cx="7" cy="6" r="3" fill="#F8E0A8" stroke="#8A6A20"/><path d="M2 15 Q7 7 12 15" fill="#4AA04A" stroke="#2A702A"/><circle cx="12" cy="7" r="3" fill="#F8E0A8" stroke="#8A6A20"/><path d="M7 16 Q12 8 17 16" fill="#4AA04A" stroke="#2A702A"/></svg>
<div class="t" style="left:51px;top:432.5px;font-size:11px;line-height:15px;color:#000;font-weight:400;">Счета</div>
<svg style="left:52px;top:450px" width="14" height="16" viewBox="0 0 14 16"><circle cx="7" cy="5" r="3.5" fill="#F4D088" stroke="#8A6A20"/><path d="M1 15.5 Q7 5 13 15.5 Z" fill="#3CA83C" stroke="#207020"/></svg>
<div class="b" style="left:71px;top:451px;width:17px;height:14px;overflow:hidden"><div class="t" style="left:0;top:0;font-size:11px;line-height:14px">618</div></div>
<svg style="left:52px;top:467px" width="14" height="16" viewBox="0 0 14 16"><circle cx="7" cy="5" r="3.5" fill="#F4D088" stroke="#8A6A20"/><path d="M1 15.5 Q7 5 13 15.5 Z" fill="#3CA83C" stroke="#207020"/></svg>
<div class="b" style="left:71px;top:468px;width:17px;height:14px;overflow:hidden"><div class="t" style="left:0;top:0;font-size:11px;line-height:14px">618</div></div>
<div class="b" style="left:13px;top:489px;width:9px;height:9px;background:#FFF;border:1px solid #8C9AB0;"></div><div class="b" style="left:15px;top:493px;width:5px;height:1px;background:#000;"></div><div class="b" style="left:17px;top:491px;width:1px;height:5px;background:#000;"></div>
<svg style="left:30px;top:485px" width="16" height="16" viewBox="0 0 16 16"><rect x="1" y="1" width="14" height="14" rx="1" fill="#F0C850" stroke="#B08A30"/><text x="4.5" y="12.5" font-size="11" font-style="italic" font-weight="700" font-family="Liberation Serif" fill="#8A5A10">f</text></svg>
<div class="b" style="left:51px;top:486px;width:37px;height:14px;overflow:hidden"><div class="t" style="left:0;top:0;font-size:11px;line-height:14px">Индика</div></div>
<div class="b" style="left:13px;top:508px;width:9px;height:9px;background:#FFF;border:1px solid #8C9AB0;"></div><div class="b" style="left:15px;top:512px;width:5px;height:1px;background:#000;"></div><div class="b" style="left:17px;top:510px;width:1px;height:5px;background:#000;"></div>
<svg style="left:30px;top:504px" width="17" height="16" viewBox="0 0 17 16"><ellipse cx="8" cy="5" rx="7.5" ry="3.5" fill="#5A8AD8" stroke="#3060B0"/><path d="M2 7 Q8 16 14 7" fill="#F8D878" stroke="#C0A040"/></svg>
<div class="b" style="left:51px;top:505px;width:37px;height:14px;overflow:hidden"><div class="t" style="left:0;top:0;font-size:11px;line-height:14px">Советн</div></div>
<div class="b" style="left:13px;top:526px;width:9px;height:9px;background:#FFF;border:1px solid #8C9AB0;"></div><div class="b" style="left:15px;top:530px;width:5px;height:1px;background:#000;"></div><div class="b" style="left:17px;top:528px;width:1px;height:5px;background:#000;"></div>
<svg style="left:30px;top:522px" width="16" height="16" viewBox="0 0 16 16"><rect x="1" y="1" width="14" height="14" rx="1" fill="#F0C850" stroke="#B08A30"/><text x="4.5" y="12.5" font-size="11" font-style="italic" font-weight="700" font-family="Liberation Serif" fill="#8A5A10">f</text></svg>
<div class="b" style="left:51px;top:523px;width:37px;height:14px;overflow:hidden"><div class="t" style="left:0;top:0;font-size:11px;line-height:14px">Пользо</div></div>
<div class="b" style="left:13px;top:545px;width:9px;height:9px;background:#FFF;border:1px solid #8C9AB0;"></div><div class="b" style="left:15px;top:549px;width:5px;height:1px;background:#000;"></div><div class="b" style="left:17px;top:547px;width:1px;height:5px;background:#000;"></div>
<svg style="left:30px;top:541px" width="16" height="16" viewBox="0 0 16 16"><path d="M3 1 H13 V13 H3 Z" fill="#F8E8B0" stroke="#B09040"/><path d="M5 4 H11 M5 7 H11 M5 10 H9" stroke="#B09040"/><path d="M1 13 H15" stroke="#B09040" stroke-width="2"/></svg>
<div class="b" style="left:51px;top:542px;width:37px;height:14px;overflow:hidden"><div class="t" style="left:0;top:0;font-size:11px;line-height:14px">Скрипт</div></div>
<div class="b" style="left:3px;top:662px;width:85px;height:1px;background:#000;"></div>
<div class="b" style="left:5px;top:662px;width:56px;height:19px;background:#FFF;border:1px solid #000;border-top:none;"></div>
<div class="t" style="left:15px;top:663.8px;font-size:10.5px;line-height:14.5px;color:#000;font-weight:400;">Общие</div>
<div class="b" style="left:62px;top:663px;width:26px;height:16px;overflow:hidden"><div class="t" style="left:8px;top:1px;font-size:11px;line-height:14px;color:#8D8A7E">Изб</div></div>
<div class="b" style="left:3px;top:683px;width:85px;height:1px;background:#D8D2BD;"></div>
<div class="b" style="left:89px;top:100px;width:935px;height:1px;background:#A8A590;"></div>
<div class="b" style="left:91px;top:101px;width:933px;height:1px;background:#716F64;"></div>
<div class="b" style="left:91px;top:101px;width:1px;height:563px;background:#716F64;"></div>
<div class="b" style="left:92px;top:102px;width:930px;height:562px;background:#000;"></div>
<svg style="left:0;top:0" width="1024" height="719" shape-rendering="crispEdges"><line x1="96" y1="115.5" x2="982" y2="115.5" stroke="#8796A8" stroke-dasharray="3,3"/><line x1="96" y1="148.5" x2="982" y2="148.5" stroke="#8796A8" stroke-dasharray="3,3"/><line x1="96" y1="181.5" x2="982" y2="181.5" stroke="#8796A8" stroke-dasharray="3,3"/><line x1="96" y1="214.5" x2="982" y2="214.5" stroke="#8796A8" stroke-dasharray="3,3"/><line x1="96" y1="247.5" x2="982" y2="247.5" stroke="#8796A8" stroke-dasharray="3,3"/><line x1="96" y1="280.5" x2="982" y2="280.5" stroke="#8796A8" stroke-dasharray="3,3"/><line x1="96" y1="313.5" x2="982" y2="313.5" stroke="#8796A8" stroke-dasharray="3,3"/><line x1="96" y1="346.5" x2="982" y2="346.5" stroke="#8796A8" stroke-dasharray="3,3"/><line x1="96" y1="379.5" x2="982" y2="379.5" stroke="#8796A8" stroke-dasharray="3,3"/><line x1="96" y1="412.5" x2="982" y2="412.5" stroke="#8796A8" stroke-dasharray="3,3"/><line x1="96" y1="445.5" x2="982" y2="445.5" stroke="#8796A8" stroke-dasharray="3,3"/><line x1="96" y1="478.5" x2="982" y2="478.5" stroke="#8796A8" stroke-dasharray="3,3"/><line x1="96" y1="511.5" x2="982" y2="511.5" stroke="#8796A8" stroke-dasharray="3,3"/><line x1="96" y1="544.5" x2="982" y2="544.5" stroke="#8796A8" stroke-dasharray="3,3"/><line x1="96" y1="577.5" x2="982" y2="577.5" stroke="#8796A8" stroke-dasharray="3,3"/><line x1="96" y1="610.5" x2="982" y2="610.5" stroke="#8796A8" stroke-dasharray="3,3"/><line x1="96" y1="643.5" x2="982" y2="643.5" stroke="#8796A8" stroke-dasharray="3,3"/><line x1="95.5" y1="104" x2="95.5" y2="646" stroke="#8796A8" stroke-dasharray="3,3"/><line x1="127.5" y1="104" x2="127.5" y2="646" stroke="#8796A8" stroke-dasharray="3,3"/><line x1="159.5" y1="104" x2="159.5" y2="646" stroke="#8796A8" stroke-dasharray="3,3"/><line x1="191.5" y1="104" x2="191.5" y2="646" stroke="#8796A8" stroke-dasharray="3,3"/><line x1="223.5" y1="104" x2="223.5" y2="646" stroke="#8796A8" stroke-dasharray="3,3"/><line x1="255.5" y1="104" x2="255.5" y2="646" stroke="#8796A8" stroke-dasharray="3,3"/><line x1="287.5" y1="104" x2="287.5" y2="646" stroke="#8796A8" stroke-dasharray="3,3"/><line x1="319.5" y1="104" x2="319.5" y2="646" stroke="#8796A8" stroke-dasharray="3,3"/><line x1="351.5" y1="104" x2="351.5" y2="646" stroke="#8796A8" stroke-dasharray="3,3"/><line x1="383.5" y1="104" x2="383.5" y2="646" stroke="#8796A8" stroke-dasharray="3,3"/><line x1="415.5" y1="104" x2="415.5" y2="646" stroke="#8796A8" stroke-dasharray="3,3"/><line x1="447.5" y1="104" x2="447.5" y2="646" stroke="#8796A8" stroke-dasharray="3,3"/><line x1="479.5" y1="104" x2="479.5" y2="646" stroke="#8796A8" stroke-dasharray="3,3"/><line x1="511.5" y1="104" x2="511.5" y2="646" stroke="#8796A8" stroke-dasharray="3,3"/><line x1="543.5" y1="104" x2="543.5" y2="646" stroke="#8796A8" stroke-dasharray="3,3"/><line x1="575.5" y1="104" x2="575.5" y2="646" stroke="#8796A8" stroke-dasharray="3,3"/><line x1="607.5" y1="104" x2="607.5" y2="646" stroke="#8796A8" stroke-dasharray="3,3"/><line x1="639.5" y1="104" x2="639.5" y2="646" stroke="#8796A8" stroke-dasharray="3,3"/><line x1="671.5" y1="104" x2="671.5" y2="646" stroke="#8796A8" stroke-dasharray="3,3"/><line x1="703.5" y1="104" x2="703.5" y2="646" stroke="#8796A8" stroke-dasharray="3,3"/><line x1="735.5" y1="104" x2="735.5" y2="646" stroke="#8796A8" stroke-dasharray="3,3"/><line x1="767.5" y1="104" x2="767.5" y2="646" stroke="#8796A8" stroke-dasharray="3,3"/><line x1="799.5" y1="104" x2="799.5" y2="646" stroke="#8796A8" stroke-dasharray="3,3"/><line x1="831.5" y1="104" x2="831.5" y2="646" stroke="#8796A8" stroke-dasharray="3,3"/><line x1="863.5" y1="104" x2="863.5" y2="646" stroke="#8796A8" stroke-dasharray="3,3"/><line x1="895.5" y1="104" x2="895.5" y2="646" stroke="#8796A8" stroke-dasharray="3,3"/><line x1="927.5" y1="104" x2="927.5" y2="646" stroke="#8796A8" stroke-dasharray="3,3"/><line x1="959.5" y1="104" x2="959.5" y2="646" stroke="#8796A8" stroke-dasharray="3,3"/><path d="M94.5 104.5 H982.5 V646.5 H94.5 Z" fill="none" stroke="#FFF"/><line x1="983" y1="115.5" x2="985" y2="115.5" stroke="#FFF"/><line x1="983" y1="148.5" x2="985" y2="148.5" stroke="#FFF"/><line x1="983" y1="181.5" x2="985" y2="181.5" stroke="#FFF"/><line x1="983" y1="214.5" x2="985" y2="214.5" stroke="#FFF"/><line x1="983" y1="247.5" x2="985" y2="247.5" stroke="#FFF"/><line x1="983" y1="280.5" x2="985" y2="280.5" stroke="#FFF"/><line x1="983" y1="313.5" x2="985" y2="313.5" stroke="#FFF"/><line x1="983" y1="346.5" x2="985" y2="346.5" stroke="#FFF"/><line x1="983" y1="379.5" x2="985" y2="379.5" stroke="#FFF"/><line x1="983" y1="412.5" x2="985" y2="412.5" stroke="#FFF"/><line x1="983" y1="445.5" x2="985" y2="445.5" stroke="#FFF"/><line x1="983" y1="478.5" x2="985" y2="478.5" stroke="#FFF"/><line x1="983" y1="511.5" x2="985" y2="511.5" stroke="#FFF"/><line x1="983" y1="544.5" x2="985" y2="544.5" stroke="#FFF"/><line x1="983" y1="577.5" x2="985" y2="577.5" stroke="#FFF"/><line x1="983" y1="610.5" x2="985" y2="610.5" stroke="#FFF"/><line x1="983" y1="643.5" x2="985" y2="643.5" stroke="#FFF"/><line x1="95.5" y1="647" x2="95.5" y2="651" stroke="#FFF"/><line x1="159.5" y1="647" x2="159.5" y2="651" stroke="#FFF"/><line x1="223.5" y1="647" x2="223.5" y2="651" stroke="#FFF"/><line x1="287.5" y1="647" x2="287.5" y2="651" stroke="#FFF"/><line x1="351.5" y1="647" x2="351.5" y2="651" stroke="#FFF"/><line x1="415.5" y1="647" x2="415.5" y2="651" stroke="#FFF"/><line x1="479.5" y1="647" x2="479.5" y2="651" stroke="#FFF"/><line x1="543.5" y1="647" x2="543.5" y2="651" stroke="#FFF"/><line x1="607.5" y1="647" x2="607.5" y2="651" stroke="#FFF"/><line x1="671.5" y1="647" x2="671.5" y2="651" stroke="#FFF"/><line x1="735.5" y1="647" x2="735.5" y2="651" stroke="#FFF"/><line x1="799.5" y1="647" x2="799.5" y2="651" stroke="#FFF"/><line x1="863.5" y1="647" x2="863.5" y2="651" stroke="#FFF"/><line x1="927.5" y1="647" x2="927.5" y2="651" stroke="#FFF"/><line x1="95" y1="513.5" x2="982" y2="513.5" stroke="#FF0000" stroke-dasharray="9,6,3,6" stroke-dashoffset="-1"/><line x1="95" y1="581.5" x2="982" y2="581.5" stroke="#00C800" stroke-dasharray="9,6,3,6" stroke-dashoffset="-1"/><line x1="95" y1="586.5" x2="982" y2="586.5" stroke="#778899"/><path d="M95,111 L98,113 L104,119 L120,133 L127,136.5 L142,145 L155,147.7 L175,147 L185,148.7 L195,154 L204,155.5" fill="none" stroke="#FF0000" stroke-width="1"/><path d="M479,487 L490,505 L505,526 L516,542 L530,552 L543,555 L555,553 L564,551 L580,549 L595,547 L620,540 L700,525 L743,520 L759,522 L775,518 L788,521 L806,530 L828,545 L849,554 L865,565 L880,578 L896,591 L907,598 L919,602 L927,600 L939,599 L960,596" fill="none" stroke="#FF0000" stroke-width="1"/><line x1="95.5" y1="132" x2="95.5" y2="157" stroke="#00FF00"/><rect x="93.5" y="135.5" width="4" height="16" fill="#FFFFFF" stroke="#00FF00"/><line x1="103.5" y1="146" x2="103.5" y2="162" stroke="#00FF00"/><rect x="101.5" y="149.5" width="4" height="3" fill="#FFFFFF" stroke="#00FF00"/><line x1="111.5" y1="149" x2="111.5" y2="168" stroke="#00FF00"/><rect x="109.5" y="149.5" width="4" height="13" fill="#FFFFFF" stroke="#00FF00"/><line x1="119.5" y1="154" x2="119.5" y2="175" stroke="#00FF00"/><rect x="117.5" y="162.5" width="4" height="6" fill="#FFFFFF" stroke="#00FF00"/><line x1="127.5" y1="136" x2="127.5" y2="169" stroke="#00FF00"/><rect x="125.5" y="142.5" width="4" height="26" fill="#000000" stroke="#00FF00"/><line x1="135.5" y1="131" x2="135.5" y2="160" stroke="#00FF00"/><rect x="133.5" y="144.5" width="4" height="3" fill="#FFFFFF" stroke="#00FF00"/><line x1="143.5" y1="138" x2="143.5" y2="156" stroke="#00FF00"/><line x1="141" y1="148.5" x2="146" y2="148.5" stroke="#00FF00"/><line x1="151.5" y1="142" x2="151.5" y2="157" stroke="#00FF00"/><rect x="149.5" y="148.5" width="4" height="2" fill="#FFFFFF" stroke="#00FF00"/><line x1="159.5" y1="141" x2="159.5" y2="155" stroke="#00FF00"/><rect x="157.5" y="145.5" width="4" height="5" fill="#000000" stroke="#00FF00"/><line x1="167.5" y1="139" x2="167.5" y2="161" stroke="#00FF00"/><rect x="165.5" y="139.5" width="4" height="7" fill="#000000" stroke="#00FF00"/><line x1="175.5" y1="135" x2="175.5" y2="157" stroke="#00FF00"/><rect x="173.5" y="140.5" width="4" height="4" fill="#FFFFFF" stroke="#00FF00"/><line x1="183.5" y1="132" x2="183.5" y2="170" stroke="#00FF00"/><rect x="181.5" y="145.5" width="4" height="11" fill="#FFFFFF" stroke="#00FF00"/><line x1="191.5" y1="146" x2="191.5" y2="187" stroke="#00FF00"/><rect x="189.5" y="156.5" width="4" height="20" fill="#FFFFFF" stroke="#00FF00"/><line x1="199.5" y1="174" x2="199.5" y2="198" stroke="#00FF00"/><rect x="197.5" y="176.5" width="4" height="11" fill="#FFFFFF" stroke="#00FF00"/><line x1="423.5" y1="465" x2="423.5" y2="519" stroke="#00FF00"/><rect x="421.5" y="470.5" width="4" height="38" fill="#FFFFFF" stroke="#00FF00"/><line x1="431.5" y1="496" x2="431.5" y2="527" stroke="#00FF00"/><rect x="429.5" y="507.5" width="4" height="6" fill="#FFFFFF" stroke="#00FF00"/><line x1="439.5" y1="508" x2="439.5" y2="558" stroke="#00FF00"/><rect x="437.5" y="513.5" width="4" height="42" fill="#FFFFFF" stroke="#00FF00"/><line x1="447.5" y1="553" x2="447.5" y2="583" stroke="#00FF00"/><rect x="445.5" y="554.5" width="4" height="3" fill="#FFFFFF" stroke="#00FF00"/><line x1="455.5" y1="545" x2="455.5" y2="564" stroke="#00FF00"/><rect x="453.5" y="557.5" width="4" height="3" fill="#FFFFFF" stroke="#00FF00"/><line x1="463.5" y1="561" x2="463.5" y2="592" stroke="#00FF00"/><rect x="461.5" y="562.5" width="4" height="10" fill="#FFFFFF" stroke="#00FF00"/><line x1="471.5" y1="553" x2="471.5" y2="579" stroke="#00FF00"/><rect x="469.5" y="557.5" width="4" height="15" fill="#000000" stroke="#00FF00"/><line x1="479.5" y1="525" x2="479.5" y2="558" stroke="#00FF00"/><rect x="477.5" y="543.5" width="4" height="12" fill="#000000" stroke="#00FF00"/><line x1="487.5" y1="567" x2="487.5" y2="589" stroke="#00FF00"/><rect x="485.5" y="581.5" width="4" height="5" fill="#000000" stroke="#00FF00"/><line x1="495.5" y1="560" x2="495.5" y2="599" stroke="#00FF00"/><rect x="493.5" y="561.5" width="4" height="19" fill="#000000" stroke="#00FF00"/><line x1="503.5" y1="558" x2="503.5" y2="581" stroke="#00FF00"/><rect x="501.5" y="561.5" width="4" height="13" fill="#FFFFFF" stroke="#00FF00"/><line x1="511.5" y1="548" x2="511.5" y2="576" stroke="#00FF00"/><rect x="509.5" y="555.5" width="4" height="20" fill="#000000" stroke="#00FF00"/><line x1="519.5" y1="534" x2="519.5" y2="560" stroke="#00FF00"/><rect x="517.5" y="537.5" width="4" height="20" fill="#000000" stroke="#00FF00"/><line x1="527.5" y1="532" x2="527.5" y2="543" stroke="#00FF00"/><rect x="525.5" y="535.5" width="4" height="2" fill="#FFFFFF" stroke="#00FF00"/><line x1="535.5" y1="534" x2="535.5" y2="554" stroke="#00FF00"/><rect x="533.5" y="534.5" width="4" height="9" fill="#FFFFFF" stroke="#00FF00"/><line x1="543.5" y1="541" x2="543.5" y2="551" stroke="#00FF00"/><rect x="541.5" y="543.5" width="4" height="4" fill="#FFFFFF" stroke="#00FF00"/><line x1="551.5" y1="533" x2="551.5" y2="551" stroke="#00FF00"/><rect x="549.5" y="534.5" width="4" height="13" fill="#000000" stroke="#00FF00"/><line x1="559.5" y1="532" x2="559.5" y2="552" stroke="#00FF00"/><rect x="557.5" y="532.5" width="4" height="4" fill="#000000" stroke="#00FF00"/><line x1="567.5" y1="513" x2="567.5" y2="546" stroke="#00FF00"/><rect x="565.5" y="532.5" width="4" height="11" fill="#FFFFFF" stroke="#00FF00"/><line x1="575.5" y1="545" x2="575.5" y2="575" stroke="#00FF00"/><rect x="573.5" y="545.5" width="4" height="20" fill="#FFFFFF" stroke="#00FF00"/><line x1="583.5" y1="547" x2="583.5" y2="571" stroke="#00FF00"/><rect x="581.5" y="547.5" width="4" height="17" fill="#000000" stroke="#00FF00"/><line x1="591.5" y1="520" x2="591.5" y2="562" stroke="#00FF00"/><rect x="589.5" y="530.5" width="4" height="18" fill="#000000" stroke="#00FF00"/><line x1="615.5" y1="510" x2="615.5" y2="554" stroke="#00FF00"/><rect x="613.5" y="520.5" width="4" height="20" fill="#FFFFFF" stroke="#00FF00"/><line x1="623.5" y1="510" x2="623.5" y2="565" stroke="#00FF00"/><rect x="621.5" y="520.5" width="4" height="20" fill="#000000" stroke="#00FF00"/><line x1="727.5" y1="540" x2="727.5" y2="557" stroke="#00FF00"/><rect x="725.5" y="547.5" width="4" height="6" fill="#FFFFFF" stroke="#00FF00"/><line x1="735.5" y1="545" x2="735.5" y2="556" stroke="#00FF00"/><rect x="733.5" y="549.5" width="4" height="3" fill="#000000" stroke="#00FF00"/><line x1="743.5" y1="537" x2="743.5" y2="554" stroke="#00FF00"/><rect x="741.5" y="539.5" width="4" height="11" fill="#000000" stroke="#00FF00"/><line x1="751.5" y1="519" x2="751.5" y2="548" stroke="#00FF00"/><rect x="749.5" y="525.5" width="4" height="16" fill="#000000" stroke="#00FF00"/><line x1="759.5" y1="522" x2="759.5" y2="559" stroke="#00FF00"/><rect x="757.5" y="525.5" width="4" height="14" fill="#FFFFFF" stroke="#00FF00"/><line x1="767.5" y1="480" x2="767.5" y2="551" stroke="#00FF00"/><rect x="765.5" y="501.5" width="4" height="38" fill="#000000" stroke="#00FF00"/><line x1="775.5" y1="480" x2="775.5" y2="506" stroke="#00FF00"/><rect x="773.5" y="490.5" width="4" height="11" fill="#000000" stroke="#00FF00"/><line x1="783.5" y1="480" x2="783.5" y2="513" stroke="#00FF00"/><rect x="781.5" y="489.5" width="4" height="23" fill="#FFFFFF" stroke="#00FF00"/><line x1="791.5" y1="502" x2="791.5" y2="521" stroke="#00FF00"/><rect x="789.5" y="512.5" width="4" height="8" fill="#FFFFFF" stroke="#00FF00"/><line x1="799.5" y1="520" x2="799.5" y2="589" stroke="#00FF00"/><rect x="797.5" y="520.5" width="4" height="37" fill="#FFFFFF" stroke="#00FF00"/><line x1="807.5" y1="527" x2="807.5" y2="575" stroke="#00FF00"/><rect x="805.5" y="557.5" width="4" height="12" fill="#FFFFFF" stroke="#00FF00"/><line x1="815.5" y1="563" x2="815.5" y2="618" stroke="#00FF00"/><rect x="813.5" y="568.5" width="4" height="32" fill="#FFFFFF" stroke="#00FF00"/><line x1="823.5" y1="600" x2="823.5" y2="634" stroke="#00FF00"/><line x1="821" y1="600.5" x2="826" y2="600.5" stroke="#00FF00"/><line x1="831.5" y1="597" x2="831.5" y2="613" stroke="#00FF00"/><rect x="829.5" y="597.5" width="4" height="3" fill="#000000" stroke="#00FF00"/><line x1="839.5" y1="592" x2="839.5" y2="608" stroke="#00FF00"/><line x1="837" y1="597.5" x2="842" y2="597.5" stroke="#00FF00"/><line x1="847.5" y1="587" x2="847.5" y2="617" stroke="#00FF00"/><rect x="845.5" y="597.5" width="4" height="9" fill="#FFFFFF" stroke="#00FF00"/><line x1="855.5" y1="596" x2="855.5" y2="610" stroke="#00FF00"/><line x1="853" y1="606.5" x2="858" y2="606.5" stroke="#00FF00"/><line x1="863.5" y1="605" x2="863.5" y2="613" stroke="#00FF00"/><rect x="861.5" y="605.5" width="4" height="4" fill="#FFFFFF" stroke="#00FF00"/><line x1="871.5" y1="601" x2="871.5" y2="613" stroke="#00FF00"/><rect x="869.5" y="605.5" width="4" height="4" fill="#000000" stroke="#00FF00"/><line x1="879.5" y1="606" x2="879.5" y2="616" stroke="#00FF00"/><line x1="877" y1="606.5" x2="882" y2="606.5" stroke="#00FF00"/><line x1="887.5" y1="597" x2="887.5" y2="611" stroke="#00FF00"/><rect x="885.5" y="600.5" width="4" height="6" fill="#000000" stroke="#00FF00"/><line x1="895.5" y1="596" x2="895.5" y2="612" stroke="#00FF00"/><rect x="893.5" y="599.5" width="4" height="2" fill="#FFFFFF" stroke="#00FF00"/><line x1="903.5" y1="591" x2="903.5" y2="608" stroke="#00FF00"/><rect x="901.5" y="593.5" width="4" height="8" fill="#000000" stroke="#00FF00"/><line x1="911.5" y1="581" x2="911.5" y2="600" stroke="#00FF00"/><rect x="909.5" y="586.5" width="4" height="7" fill="#000000" stroke="#00FF00"/><line x1="919.5" y1="585" x2="919.5" y2="605" stroke="#00FF00"/><rect x="917.5" y="586.5" width="4" height="18" fill="#FFFFFF" stroke="#00FF00"/><line x1="927.5" y1="591" x2="927.5" y2="607" stroke="#00FF00"/><rect x="925.5" y="596.5" width="4" height="7" fill="#000000" stroke="#00FF00"/><line x1="935.5" y1="575" x2="935.5" y2="597" stroke="#00FF00"/><rect x="933.5" y="580.5" width="4" height="16" fill="#000000" stroke="#00FF00"/><line x1="943.5" y1="576" x2="943.5" y2="599" stroke="#00FF00"/><rect x="941.5" y="580.5" width="4" height="6" fill="#FFFFFF" stroke="#00FF00"/><line x1="951.5" y1="562" x2="951.5" y2="597" stroke="#00FF00"/><rect x="949.5" y="579.5" width="4" height="6" fill="#000000" stroke="#00FF00"/><line x1="959.5" y1="574" x2="959.5" y2="597" stroke="#00FF00"/><rect x="957.5" y="580.5" width="4" height="6" fill="#FFFFFF" stroke="#00FF00"/><rect x="985" y="580" width="37" height="11" fill="#FFF"/></svg>
<div class="t" style="left:988px;top:108.3px;font-size:9.3px;line-height:13.3px;color:#FFF;font-weight:400;">1.25470</div>
<div class="t" style="left:988px;top:141.3px;font-size:9.3px;line-height:13.3px;color:#FFF;font-weight:400;">1.25275</div>
<div class="t" style="left:988px;top:174.3px;font-size:9.3px;line-height:13.3px;color:#FFF;font-weight:400;">1.25075</div>
<div class="t" style="left:988px;top:207.3px;font-size:9.3px;line-height:13.3px;color:#FFF;font-weight:400;">1.24875</div>
<div class="t" style="left:988px;top:240.3px;font-size:9.3px;line-height:13.3px;color:#FFF;font-weight:400;">1.24675</div>
<div class="t" style="left:988px;top:273.4px;font-size:9.3px;line-height:13.3px;color:#FFF;font-weight:400;">1.24475</div>
<div class="t" style="left:988px;top:306.4px;font-size:9.3px;line-height:13.3px;color:#FFF;font-weight:400;">1.24275</div>
<div class="t" style="left:988px;top:339.4px;font-size:9.3px;line-height:13.3px;color:#FFF;font-weight:400;">1.24080</div>
<div class="t" style="left:988px;top:372.4px;font-size:9.3px;line-height:13.3px;color:#FFF;font-weight:400;">1.23880</div>
<div class="t" style="left:988px;top:405.4px;font-size:9.3px;line-height:13.3px;color:#FFF;font-weight:400;">1.23680</div>
<div class="t" style="left:988px;top:438.4px;font-size:9.3px;line-height:13.3px;color:#FFF;font-weight:400;">1.23480</div>
<div class="t" style="left:988px;top:471.4px;font-size:9.3px;line-height:13.3px;color:#FFF;font-weight:400;">1.23280</div>
<div class="t" style="left:988px;top:504.4px;font-size:9.3px;line-height:13.3px;color:#FFF;font-weight:400;">1.23080</div>
<div class="t" style="left:988px;top:537.4px;font-size:9.3px;line-height:13.3px;color:#FFF;font-weight:400;">1.22880</div>
<div class="t" style="left:988px;top:570.4px;font-size:9.3px;line-height:13.3px;color:#FFF;font-weight:400;">1.22685</div>
<div class="t" style="left:988px;top:603.4px;font-size:9.3px;line-height:13.3px;color:#FFF;font-weight:400;">1.22485</div>
<div class="t" style="left:988px;top:636.4px;font-size:9.3px;line-height:13.3px;color:#FFF;font-weight:400;">1.22285</div>
<div class="t" style="left:988px;top:579.5px;font-size:9px;line-height:13px;color:#000;font-weight:400;">1.22631</div>
<div class="t" style="left:95px;top:649.5px;font-size:9px;line-height:13px;color:#FFF;font-weight:400;">4 Jul 2012</div>
<div class="t" style="left:159px;top:649.5px;font-size:9px;line-height:13px;color:#FFF;font-weight:400;">5 Jul 07:00</div>
<div class="t" style="left:223px;top:649.5px;font-size:9px;line-height:13px;color:#FFF;font-weight:400;">5 Jul 15:00</div>
<div class="t" style="left:287px;top:649.5px;font-size:9px;line-height:13px;color:#FFF;font-weight:400;">5 Jul 23:00</div>
<div class="t" style="left:351px;top:649.5px;font-size:9px;line-height:13px;color:#FFF;font-weight:400;">6 Jul 07:00</div>
<div class="t" style="left:415px;top:649.5px;font-size:9px;line-height:13px;color:#FFF;font-weight:400;">6 Jul 15:00</div>
<div class="t" style="left:479px;top:649.5px;font-size:9px;line-height:13px;color:#FFF;font-weight:400;">6 Jul 23:00</div>
<div class="t" style="left:543px;top:649.5px;font-size:9px;line-height:13px;color:#FFF;font-weight:400;">9 Jul 07:00</div>
<div class="t" style="left:607px;top:649.5px;font-size:9px;line-height:13px;color:#FFF;font-weight:400;">9 Jul 15:00</div>
<div class="t" style="left:671px;top:649.5px;font-size:9px;line-height:13px;color:#FFF;font-weight:400;">9 Jul 23:00</div>
<div class="t" style="left:735px;top:649.5px;font-size:9px;line-height:13px;color:#FFF;font-weight:400;">10 Jul 07:00</div>
<div class="t" style="left:799px;top:649.5px;font-size:9px;line-height:13px;color:#FFF;font-weight:400;">10 Jul 15:00</div>
<div class="t" style="left:863px;top:649.5px;font-size:9px;line-height:13px;color:#FFF;font-weight:400;">10 Jul 23:00</div>
<div class="t" style="left:927px;top:649.5px;font-size:9px;line-height:13px;color:#FFF;font-weight:400;">11 Jul 07:00</div>
<div class="t" style="left:98px;top:105.8px;font-size:9.5px;line-height:13.5px;color:#FFF;font-weight:400;background:#000;line-height:11px;top:107px;">EURUSD,H1&nbsp; 1.22674 1.22680 1.22600 1.22631</div>
<div class="t" style="left:100px;top:568.8px;font-size:9.5px;line-height:13.5px;color:#FFF;font-weight:400;">#10079568 buy</div>
<div class="b" style="left:204px;top:107px;width:759px;height:381px;background:#0A3ED8;border-radius:7px 7px 0 0;border:1px solid #0019A0;border-top-color:#0848E8;"></div>
<div class="b" style="left:205px;top:108px;width:757px;height:28px;border-radius:6px 6px 0 0;background:linear-gradient(180deg,#3D8CFF 0px,#3A8AFF 2px,#1A70F5 3px,#0058E8 5px,#0058E8 16px,#0062F4 18px,#0066FF 20px,#0064FC 26px,#0050E0 27px,#0038C8 28px);"></div>
<div class="b" style="left:205px;top:135px;width:3px;height:352px;background:linear-gradient(90deg,#0848E0,#1660F0 1px,#0A46D8 2px);"></div>
<div class="b" style="left:959px;top:135px;width:3px;height:352px;background:linear-gradient(90deg,#0A50E8 0 1px,#0036C4 1px 2px,#0020A8 2px);"></div>
<div class="b" style="left:205px;top:484px;width:757px;height:3px;background:linear-gradient(180deg,#0A5AF0 0 1px,#0040D4 1px 2px,#0024B0 2px);"></div>
<div class="b" style="left:207px;top:136px;width:753px;height:349px;background:#ECE9D8;"></div>
<div class="t" style="left:211px;top:115.5px;font-size:13px;line-height:17px;color:#FFF;font-weight:700;text-shadow:1px 1px 0 #0A1E80;">Ордер</div>
<div class="b" style="left:891px;top:112px;width:21px;height:21px;border:1px solid #FFF;border-radius:3px;background:linear-gradient(135deg,#6AA0FF,#2A6AF0 55%,#1A50D0);"></div>
<div class="b" style="left:897px;top:124px;width:8px;height:3px;background:#FFF;"></div>
<div class="b" style="left:914px;top:112px;width:21px;height:21px;border:1px solid #7CA4F0;border-radius:3px;background:linear-gradient(135deg,#3A78F0,#1A5AE0 55%,#1048C8);"></div>
<div class="b" style="left:919px;top:117px;width:11px;height:11px;border:1px solid #7CA4F0;border-top:2px solid #7CA4F0;"></div>
<div class="b" style="left:937px;top:112px;width:21px;height:21px;border:1px solid #FFF;border-radius:3px;background:linear-gradient(135deg,#F0A080,#E06030 50%,#C84A20);"></div>
<svg style="left:937px;top:112px" width="21" height="21"><path d="M6 6 L15 15 M15 6 L6 15" stroke="#FFF" stroke-width="2.2"/></svg>
<div class="b" style="left:215px;top:149px;width:299px;height:328px;background:#FFF;border:1px solid;border-color:#ACA899 #FFFFFF #FFFFFF #ACA899;"></div>
<div class="b" style="left:216px;top:150px;width:297px;height:326px;border:1px solid;border-color:#716F64 #F1EFE2 #F1EFE2 #716F64;"></div>
<svg style="left:0;top:0" width="1024" height="719"><line x1="252.5" y1="154" x2="252.5" y2="472" stroke="#C0C0C0" stroke-dasharray="3,3" shape-rendering="crispEdges"/><line x1="284.5" y1="154" x2="284.5" y2="472" stroke="#C0C0C0" stroke-dasharray="3,3" shape-rendering="crispEdges"/><line x1="316.5" y1="154" x2="316.5" y2="472" stroke="#C0C0C0" stroke-dasharray="3,3" shape-rendering="crispEdges"/><line x1="348.5" y1="154" x2="348.5" y2="472" stroke="#C0C0C0" stroke-dasharray="3,3" shape-rendering="crispEdges"/><line x1="380.5" y1="154" x2="380.5" y2="472" stroke="#C0C0C0" stroke-dasharray="3,3" shape-rendering="crispEdges"/><line x1="412.5" y1="154" x2="412.5" y2="472" stroke="#C0C0C0" stroke-dasharray="3,3" shape-rendering="crispEdges"/><line x1="444.5" y1="154" x2="444.5" y2="472" stroke="#C0C0C0" stroke-dasharray="3,3" shape-rendering="crispEdges"/><line x1="220" y1="183.5" x2="472" y2="183.5" stroke="#C0C0C0" stroke-dasharray="3,3" shape-rendering="crispEdges"/><line x1="220" y1="215.5" x2="472" y2="215.5" stroke="#C0C0C0" stroke-dasharray="3,3" shape-rendering="crispEdges"/><line x1="220" y1="247.5" x2="472" y2="247.5" stroke="#C0C0C0" stroke-dasharray="3,3" shape-rendering="crispEdges"/><line x1="220" y1="279.5" x2="472" y2="279.5" stroke="#C0C0C0" stroke-dasharray="3,3" shape-rendering="crispEdges"/><line x1="220" y1="311.5" x2="472" y2="311.5" stroke="#C0C0C0" stroke-dasharray="3,3" shape-rendering="crispEdges"/><line x1="220" y1="343.5" x2="472" y2="343.5" stroke="#C0C0C0" stroke-dasharray="3,3" shape-rendering="crispEdges"/><line x1="220" y1="375.5" x2="472" y2="375.5" stroke="#C0C0C0" stroke-dasharray="3,3" shape-rendering="crispEdges"/><line x1="220" y1="407.5" x2="472" y2="407.5" stroke="#C0C0C0" stroke-dasharray="3,3" shape-rendering="crispEdges"/><line x1="220" y1="439.5" x2="472" y2="439.5" stroke="#C0C0C0" stroke-dasharray="3,3" shape-rendering="crispEdges"/><path d="M219.5 153.5 H472.5 V472.5 H219.5 Z" fill="none" stroke="#000" shape-rendering="crispEdges"/><path d="M220,233 L222,267 L224,255 L226,249 L228,246 L230,249 L232,245 L236,245 L239,236 L241,238 L243,225 L244,229 L246,207 L247,212 L249,177 L250,186 L252,192 L254,180 L255,186 L257,172 L259,185 L260,180 L261,202 L263,195 L265,190 L267,182 L268,190 L270,193 L272,186 L273,183 L275,197 L277,207 L279,212 L281,220 L283,228 L285,245 L287,238 L289,233 L291,241 L293,249 L295,256 L296,248 L298,246 L300,262 L302,278 L304,265 L306,262 L308,272 L309,266 L311,267 L312,273 L314,290 L315,290 L316,314 L317,330 L319,314 L320,320 L322,329 L324,320 L325,320 L327,326 L328,324 L330,318 L331,314 L333,320 L336,328 L338,340 L341,359 L343,340 L346,325 L348,350 L350,364 L352,350 L353,341 L355,365 L357,370 L360,380 L362,376 L364,373 L366,345 L367,330 L369,364 L371,350 L373,336 L375,325 L378,326 L380,328 L383,336 L386,345 L388,340 L390,341 L392,346 L394,341 L395,346 L398,344 L400,338 L401,320 L403,308 L405,335 L406,320 L408,314 L410,316 L412,313 L414,299 L417,286 L418,267 L419,280 L421,273 L473,273" fill="none" stroke="#1E64F0" stroke-width="1" shape-rendering="crispEdges"/><path d="M220,286 L222,320 L225,316 L228,319 L231,305 L233,299 L236,308 L239,311 L241,300 L243,284 L246,262 L249,233 L252,260 L254,255 L256,268 L258,266 L260,260 L263,250 L266,233 L268,245 L270,249 L273,239 L275,248 L277,262 L279,280 L282,300 L284,314 L287,305 L290,300 L294,297 L297,310 L300,331 L303,324 L306,320 L308,334 L310,346 L312,325 L313,336 L315,372 L316,380 L318,374 L320,376 L322,386 L324,378 L326,376 L328,378 L330,390 L332,398 L334,384 L335,381 L337,386 L339,400 L341,415 L344,392 L346,376 L348,420 L350,412 L351,418 L353,438 L355,416 L357,428 L360,434 L362,446 L364,454 L366,444 L369,437 L371,420 L374,405 L376,388 L380,386 L382,392 L385,388 L388,398 L390,396 L392,400 L394,398 L395,404 L397,398 L399,395 L401,380 L403,364 L405,380 L406,391 L408,386 L410,393 L413,375 L416,341 L418,320 L419,341 L473,341" fill="none" stroke="#F05A5A" stroke-width="1" shape-rendering="crispEdges"/><rect x="473" y="268" width="40" height="11" fill="#1E64F0"/><rect x="473" y="337" width="40" height="10" fill="#F05A5A"/></svg>
<div class="t" style="left:221px;top:154.5px;font-size:10px;line-height:14px;color:#000;font-weight:400;">EURUSD</div>
<div class="b" style="left:473px;top:184px;width:2px;height:1px;background:#000;"></div>
<div class="t" style="left:478.5px;top:177.5px;font-size:9px;line-height:13px;color:#000;font-weight:400;">1.22659</div>
<div class="b" style="left:473px;top:216px;width:2px;height:1px;background:#000;"></div>
<div class="t" style="left:478.5px;top:209.0px;font-size:9px;line-height:13px;color:#000;font-weight:400;">1.22653</div>
<div class="b" style="left:473px;top:248px;width:2px;height:1px;background:#000;"></div>
<div class="t" style="left:478.5px;top:241.0px;font-size:9px;line-height:13px;color:#000;font-weight:400;">1.22647</div>
<div class="b" style="left:473px;top:280px;width:2px;height:1px;background:#000;"></div>
<div class="t" style="left:478.5px;top:273.0px;font-size:9px;line-height:13px;color:#000;font-weight:400;">1.22642</div>
<div class="b" style="left:473px;top:311px;width:2px;height:1px;background:#000;"></div>
<div class="t" style="left:478.5px;top:304.8px;font-size:9px;line-height:13px;color:#000;font-weight:400;">1.22636</div>
<div class="b" style="left:473px;top:375px;width:2px;height:1px;background:#000;"></div>
<div class="t" style="left:478.5px;top:368.8px;font-size:9px;line-height:13px;color:#000;font-weight:400;">1.22625</div>
<div class="b" style="left:473px;top:408px;width:2px;height:1px;background:#000;"></div>
<div class="t" style="left:478.5px;top:401.0px;font-size:9px;line-height:13px;color:#000;font-weight:400;">1.22619</div>
<div class="b" style="left:473px;top:439px;width:2px;height:1px;background:#000;"></div>
<div class="t" style="left:478.5px;top:432.9px;font-size:9px;line-height:13px;color:#000;font-weight:400;">1.22613</div>
<div class="b" style="left:473px;top:469px;width:2px;height:1px;background:#000;"></div>
<div class="t" style="left:478.5px;top:462.5px;font-size:9px;line-height:13px;color:#000;font-weight:400;">1.22608</div>
<div class="t" style="left:478.5px;top:267.0px;font-size:9px;line-height:13px;color:#FFF;font-weight:400;">1.22643</div>
<div class="t" style="left:478.5px;top:335.3px;font-size:9px;line-height:13px;color:#FFF;font-weight:400;">1.22631</div>
<div class="t" style="right:412.5px;top:152.2px;font-size:11px;line-height:15px;color:#000;font-weight:400;">Символ:</div>
<div class="t" style="right:412.5px;top:177.7px;font-size:11px;line-height:15px;color:#000;font-weight:400;">Объем:</div>
<div class="t" style="right:412.5px;top:203.5px;font-size:11px;line-height:15px;color:#000;font-weight:400;">Стоп лосс:</div>
<div class="t" style="right:412.5px;top:229.5px;font-size:11px;line-height:15px;color:#000;font-weight:400;">Комментарий:</div>
<div class="t" style="right:412.5px;top:256.5px;font-size:11px;line-height:15px;color:#000;font-weight:400;">Тип:</div>
<div class="b" style="left:620px;top:149px;width:323px;height:21px;background:#FFF;border:1px solid #7F9DB9;"></div><div class="b" style="left:925px;top:151px;width:16px;height:17px;border:1px solid #C3D3FD;border-radius:2px;background:linear-gradient(180deg,#D2DEFC,#B6C9F5);"></div><svg style="left:929px;top:156px" width="9" height="6"><path d="M1 1 L4.5 4.5 L8 1" stroke="#4D6185" stroke-width="2" fill="none"/></svg><div class="t" style="left:624px;top:152.5px;font-size:10px;line-height:14px;color:#000;font-weight:400;">EURUSD, Euro vs US Dollar</div>
<div class="b" style="left:620px;top:175px;width:105px;height:21px;background:#FFF;border:1px solid #7F9DB9;"></div><div class="b" style="left:707px;top:177px;width:16px;height:17px;border:1px solid #C3D3FD;border-radius:2px;background:linear-gradient(180deg,#D2DEFC,#B6C9F5);"></div><svg style="left:711px;top:182px" width="9" height="6"><path d="M1 1 L4.5 4.5 L8 1" stroke="#4D6185" stroke-width="2" fill="none"/></svg><div class="t" style="left:624px;top:178.0px;font-size:11px;line-height:15px;color:#000;font-weight:400;">1.00</div>
<div class="b" style="left:620px;top:201px;width:105px;height:20px;background:#FFF;border:1px solid #7F9DB9;"></div><div class="b" style="left:708px;top:202px;width:16px;height:18px;border:1px solid #C3D3FD;border-radius:2px;background:linear-gradient(180deg,#D2DEFC,#B6C9F5);"></div><svg style="left:712px;top:205px" width="9" height="13"><path d="M1 4.5 L4.5 1 L8 4.5 M1 8.5 L4.5 12 L8 8.5" stroke="#4D6185" stroke-width="1.8" fill="none"/></svg><div class="t" style="right:322.5px;top:203.5px;font-size:11px;line-height:15px;color:#000;font-weight:400;">1.23080</div>
<div class="t" style="right:195px;top:203.5px;font-size:11px;line-height:15px;color:#000;font-weight:400;">Тейк профит:</div>
<div class="b" style="left:837px;top:201px;width:105px;height:20px;background:#FFF;border:1px solid #7F9DB9;"></div><div class="b" style="left:925px;top:202px;width:16px;height:18px;border:1px solid #C3D3FD;border-radius:2px;background:linear-gradient(180deg,#D2DEFC,#B6C9F5);"></div><svg style="left:929px;top:205px" width="9" height="13"><path d="M1 4.5 L4.5 1 L8 4.5 M1 8.5 L4.5 12 L8 8.5" stroke="#4D6185" stroke-width="1.8" fill="none"/></svg><div class="t" style="right:105.5px;top:203.5px;font-size:11px;line-height:15px;color:#000;font-weight:400;">1.22880</div>
<div class="b" style="left:620px;top:227px;width:323px;height:20px;background:#FFF;border:1px solid #7F9DB9;"></div>
<div class="b" style="left:620px;top:254px;width:323px;height:21px;background:#FFF;border:1px solid #7F9DB9;"></div><div class="b" style="left:925px;top:256px;width:16px;height:17px;border:1px solid #C3D3FD;border-radius:2px;background:linear-gradient(180deg,#D2DEFC,#B6C9F5);"></div><svg style="left:929px;top:262px" width="9" height="6"><path d="M1 1 L4.5 4.5 L8 1" stroke="#4D6185" stroke-width="2" fill="none"/></svg><div class="t" style="left:624px;top:257.0px;font-size:11px;line-height:15px;color:#000;font-weight:400;">Отложенный ордер</div>
<div class="b" style="left:522px;top:289px;width:428px;height:188px;border:1px solid #D0D0BF;border-radius:3px;"></div>
<div class="b" style="left:527px;top:282px;width:106px;height:14px;background:#ECE9D8;"></div>
<div class="t" style="left:530px;top:281.5px;font-size:11px;line-height:15px;color:#0046D5;font-weight:400;">Отложенный ордер</div>
<div class="t" style="right:412.5px;top:309.5px;font-size:11px;line-height:15px;color:#000;font-weight:400;">Тип:</div>
<div class="b" style="left:620px;top:306px;width:143px;height:21px;background:#FFF;border:1px solid #7F9DB9;"></div><div class="b" style="left:745px;top:308px;width:16px;height:17px;border:1px solid #C3D3FD;border-radius:2px;background:linear-gradient(180deg,#D2DEFC,#B6C9F5);"></div><svg style="left:749px;top:314px" width="9" height="6"><path d="M1 1 L4.5 4.5 L8 1" stroke="#4D6185" stroke-width="2" fill="none"/></svg><div class="t" style="left:624px;top:309.0px;font-size:11px;line-height:15px;color:#000;font-weight:400;">Buy Stop</div>
<div class="t" style="left:769px;top:309.9px;font-size:10.3px;line-height:14.3px;color:#000;font-weight:400;">EURUSD 1.00</div>
<div class="t" style="right:412.5px;top:341.5px;font-size:11px;line-height:15px;color:#000;font-weight:400;">по цене:</div>
<div class="b" style="left:620px;top:339px;width:143px;height:20px;background:#FFF;border:1px solid #7F9DB9;"></div><div class="b" style="left:746px;top:340px;width:16px;height:18px;border:1px solid #C3D3FD;border-radius:2px;background:linear-gradient(180deg,#D2DEFC,#B6C9F5);"></div><svg style="left:750px;top:343px" width="9" height="13"><path d="M1 4.5 L4.5 1 L8 4.5 M1 8.5 L4.5 12 L8 8.5" stroke="#4D6185" stroke-width="1.8" fill="none"/></svg><div class="t" style="right:284.5px;top:341.5px;font-size:11px;line-height:15px;color:#000;font-weight:400;">1.23680</div>
<div class="b" style="left:772px;top:339px;width:162px;height:20px;border:1px solid #C9C7BA;border-radius:3px;background:#F5F4EA;"></div>
<div class="t" style="left:805px;top:341.5px;font-size:11px;line-height:15px;color:#ACA899;font-weight:400;">Установить ордер</div>
<div class="t" style="right:412.5px;top:374.5px;font-size:11px;line-height:15px;color:#000;font-weight:400;">Истечение:</div>
<div class="b" style="left:620px;top:371px;width:143px;height:23px;background:#FFF;border:1px solid #7F9DB9;"></div><div class="b" style="left:745px;top:373px;width:16px;height:19px;border:1px solid #C3D3FD;border-radius:2px;background:linear-gradient(180deg,#D2DEFC,#B6C9F5);"></div><svg style="left:749px;top:380px" width="9" height="6"><path d="M1 1 L4.5 4.5 L8 1" stroke="#4D6185" stroke-width="2" fill="none"/></svg>
<div class="b" style="left:625px;top:376px;width:13px;height:13px;background:#FFF;border:1px solid #1C5180;"></div>
<svg style="left:627px;top:378px" width="9" height="9"><path d="M1 4 L3.5 6.5 L8 1.5" stroke="#21A121" stroke-width="2" fill="none"/></svg>
<div class="t" style="left:641px;top:374.5px;font-size:11px;line-height:15px;color:#000;font-weight:400;">19.07.2012 12:25</div>
<div class="t" style="left:557.5px;top:420.0px;font-size:11px;line-height:15px;color:#000;font-weight:400;">Вы можете установить ордер не бли</div>
<div class="t" style="left:743px;top:419.9px;font-size:11.2px;line-height:15.2px;color:#000;font-weight:400;">же 0 пунктов от рыночной цены.</div>
<div class="b" style="left:581px;top:394px;width:162px;height:153px;background:#FFF;border:1px solid #000;"></div>
<div class="b" style="left:582px;top:395px;width:160px;height:30px;background:#0054E3;"></div>
<div class="b" style="left:587px;top:401px;width:22px;height:17px;border:1px solid #F4F6FC;border-radius:1px;background:linear-gradient(180deg,#C8D6F8,#B9CBF4);"></div>
<svg style="left:593px;top:404px" width="8" height="10"><path d="M6 1 L2 5 L6 9" stroke="#3A4E7A" stroke-width="2.2" fill="none"/></svg>
<div class="b" style="left:717px;top:401px;width:22px;height:17px;border:1px solid #F4F6FC;border-radius:1px;background:linear-gradient(180deg,#C8D6F8,#B9CBF4);"></div>
<svg style="left:723px;top:404px" width="8" height="10"><path d="M2 1 L6 5 L2 9" stroke="#3A4E7A" stroke-width="2.2" fill="none"/></svg>
<div class="t" style="left:624px;top:402.0px;font-size:12px;line-height:16px;color:#FFF;font-weight:700;">Июль 2012 г.</div>
<div class="t" style="left:577.5px;width:30px;text-align:center;top:425.5px;font-size:11px;line-height:14px;color:#0046E0">Пн</div>
<div class="t" style="left:600.4px;width:30px;text-align:center;top:425.5px;font-size:11px;line-height:14px;color:#0046E0">Вт</div>
<div class="t" style="left:623.6px;width:30px;text-align:center;top:425.5px;font-size:11px;line-height:14px;color:#0046E0">Ср</div>
<div class="t" style="left:646px;width:30px;text-align:center;top:425.5px;font-size:11px;line-height:14px;color:#0046E0">Чт</div>
<div class="t" style="left:669.2px;width:30px;text-align:center;top:425.5px;font-size:11px;line-height:14px;color:#0046E0">Пт</div>
<div class="t" style="left:692.1px;width:30px;text-align:center;top:425.5px;font-size:11px;line-height:14px;color:#0046E0">Сб</div>
<div class="t" style="left:715.3px;width:30px;text-align:center;top:425.5px;font-size:11px;line-height:14px;color:#0046E0">Вс</div>
<div class="b" style="left:586px;top:439px;width:154px;height:1px;background:#000;"></div>
<div class="b" style="left:651px;top:485px;width:23px;height:15px;background:#0054E3;"></div>
<div class="b" style="left:628px;top:470px;width:23px;height:15px;border:1px solid #E02020;"></div>
<div class="t" style="left:577.5px;width:30px;text-align:center;top:440.9px;font-size:11px;line-height:14px;color:#ACA899">25</div>
<div class="t" style="left:600.4px;width:30px;text-align:center;top:440.9px;font-size:11px;line-height:14px;color:#ACA899">26</div>
<div class="t" style="left:623.6px;width:30px;text-align:center;top:440.9px;font-size:11px;line-height:14px;color:#ACA899">27</div>
<div class="t" style="left:646px;width:30px;text-align:center;top:440.9px;font-size:11px;line-height:14px;color:#ACA899">28</div>
<div class="t" style="left:669.2px;width:30px;text-align:center;top:440.9px;font-size:11px;line-height:14px;color:#ACA899">29</div>
<div class="t" style="left:692.1px;width:30px;text-align:center;top:440.9px;font-size:11px;line-height:14px;color:#ACA899">30</div>
<div class="t" style="left:715.3px;width:30px;text-align:center;top:440.9px;font-size:11px;line-height:14px;color:#000">1</div>
<div class="t" style="left:577.5px;width:30px;text-align:center;top:455.8px;font-size:11px;line-height:14px;color:#000">2</div>
<div class="t" style="left:600.4px;width:30px;text-align:center;top:455.8px;font-size:11px;line-height:14px;color:#000">3</div>
<div class="t" style="left:623.6px;width:30px;text-align:center;top:455.8px;font-size:11px;line-height:14px;color:#000">4</div>
<div class="t" style="left:646px;width:30px;text-align:center;top:455.8px;font-size:11px;line-height:14px;color:#000">5</div>
<div class="t" style="left:669.2px;width:30px;text-align:center;top:455.8px;font-size:11px;line-height:14px;color:#000">6</div>
<div class="t" style="left:692.1px;width:30px;text-align:center;top:455.8px;font-size:11px;line-height:14px;color:#000">7</div>
<div class="t" style="left:715.3px;width:30px;text-align:center;top:455.8px;font-size:11px;line-height:14px;color:#000">8</div>
<div class="t" style="left:577.5px;width:30px;text-align:center;top:471px;font-size:11px;line-height:14px;color:#000">9</div>
<div class="t" style="left:600.4px;width:30px;text-align:center;top:471px;font-size:11px;line-height:14px;color:#000">10</div>
<div class="t" style="left:623.6px;width:30px;text-align:center;top:471px;font-size:11px;line-height:14px;color:#000">11</div>
<div class="t" style="left:646px;width:30px;text-align:center;top:471px;font-size:11px;line-height:14px;color:#000">12</div>
<div class="t" style="left:669.2px;width:30px;text-align:center;top:471px;font-size:11px;line-height:14px;color:#000">13</div>
<div class="t" style="left:692.1px;width:30px;text-align:center;top:471px;font-size:11px;line-height:14px;color:#000">14</div>
<div class="t" style="left:715.3px;width:30px;text-align:center;top:471px;font-size:11px;line-height:14px;color:#000">15</div>
<div class="t" style="left:577.5px;width:30px;text-align:center;top:485.8px;font-size:11px;line-height:14px;color:#000">16</div>
<div class="t" style="left:600.4px;width:30px;text-align:center;top:485.8px;font-size:11px;line-height:14px;color:#000">17</div>
<div class="t" style="left:623.6px;width:30px;text-align:center;top:485.8px;font-size:11px;line-height:14px;color:#000">18</div>
<div class="t" style="left:646px;width:30px;text-align:center;top:485.8px;font-size:11px;line-height:14px;color:#FFF">19</div>
<div class="t" style="left:669.2px;width:30px;text-align:center;top:485.8px;font-size:11px;line-height:14px;color:#000">20</div>
<div class="t" style="left:692.1px;width:30px;text-align:center;top:485.8px;font-size:11px;line-height:14px;color:#000">21</div>
<div class="t" style="left:715.3px;width:30px;text-align:center;top:485.8px;font-size:11px;line-height:14px;color:#000">22</div>
<div class="t" style="left:577.5px;width:30px;text-align:center;top:500.7px;font-size:11px;line-height:14px;color:#000">23</div>
<div class="t" style="left:600.4px;width:30px;text-align:center;top:500.7px;font-size:11px;line-height:14px;color:#000">24</div>
<div class="t" style="left:623.6px;width:30px;text-align:center;top:500.7px;font-size:11px;line-height:14px;color:#000">25</div>
<div class="t" style="left:646px;width:30px;text-align:center;top:500.7px;font-size:11px;line-height:14px;color:#000">26</div>
<div class="t" style="left:669.2px;width:30px;text-align:center;top:500.7px;font-size:11px;line-height:14px;color:#000">27</div>
<div class="t" style="left:692.1px;width:30px;text-align:center;top:500.7px;font-size:11px;line-height:14px;color:#000">28</div>
<div class="t" style="left:715.3px;width:30px;text-align:center;top:500.7px;font-size:11px;line-height:14px;color:#000">29</div>
<div class="t" style="left:577.5px;width:30px;text-align:center;top:515.9px;font-size:11px;line-height:14px;color:#000">30</div>
<div class="t" style="left:600.4px;width:30px;text-align:center;top:515.9px;font-size:11px;line-height:14px;color:#000">31</div>
<div class="t" style="left:623.6px;width:30px;text-align:center;top:515.9px;font-size:11px;line-height:14px;color:#ACA899">1</div>
<div class="t" style="left:646px;width:30px;text-align:center;top:515.9px;font-size:11px;line-height:14px;color:#ACA899">2</div>
<div class="t" style="left:669.2px;width:30px;text-align:center;top:515.9px;font-size:11px;line-height:14px;color:#ACA899">3</div>
<div class="t" style="left:692.1px;width:30px;text-align:center;top:515.9px;font-size:11px;line-height:14px;color:#ACA899">4</div>
<div class="t" style="left:715.3px;width:30px;text-align:center;top:515.9px;font-size:11px;line-height:14px;color:#ACA899">5</div>
<div class="b" style="left:587px;top:533px;width:21px;height:13px;border:1px solid #E02020;"></div>
<div class="t" style="left:610px;top:531.5px;font-size:12px;line-height:16px;color:#000;font-weight:700;">Сегодня: 11.07.2012</div>
<div class="b" style="left:89px;top:664px;width:935px;height:2px;background:#F6F5EF;"></div>
<div class="b" style="left:89px;top:666px;width:935px;height:1px;background:#000;"></div>
<div class="b" style="left:89px;top:667px;width:935px;height:18px;background:#ECE9D8;"></div>
<div class="b" style="left:93px;top:664px;width:81px;height:21px;background:#FFF;border:1px solid #000;border-top:none;"></div>
<div class="t" style="left:104px;top:668.5px;font-size:10px;line-height:14px;color:#000;font-weight:400;">EURUSD,H1</div>
<div class="t" style="left:185px;top:668.5px;font-size:10px;line-height:14px;color:#8D8A7E;font-weight:400;">USDCHF,H4</div>
<div class="t" style="left:265px;top:668.5px;font-size:10px;line-height:14px;color:#8D8A7E;font-weight:400;">GBPUSD,H4</div>
<div class="t" style="left:344.6px;top:668.5px;font-size:10px;line-height:14px;color:#8D8A7E;font-weight:400;">USDJPY,H4</div>
<div class="b" style="left:254px;top:670px;width:1px;height:12px;background:#8D8A7E;"></div>
<div class="b" style="left:334px;top:670px;width:1px;height:12px;background:#8D8A7E;"></div>
<div class="b" style="left:410px;top:670px;width:1px;height:12px;background:#8D8A7E;"></div>
<svg style="left:995px;top:671px" width="24" height="10"><path d="M6 1 L2 5 L6 9 Z M18 1 L22 5 L18 9 Z" fill="#A7A69A"/></svg>
<div class="b" style="left:89px;top:685px;width:935px;height:1px;background:#D8D2BD;"></div>
<div class="b" style="left:0px;top:686px;width:1024px;height:2px;background:#FFF;"></div>
<div class="b" style="left:0px;top:688px;width:1024px;height:31px;background:#ECE9D8;"></div>
<svg style="left:4px;top:692px" width="7" height="7"><path d="M1 1 L6 6 M6 1 L1 6" stroke="#000" stroke-width="1.8"/></svg>
<div class="b" style="left:5px;top:702px;width:4px;height:1px;background:#B9B5A2;"></div>
<div class="b" style="left:5px;top:704px;width:4px;height:1px;background:#B9B5A2;"></div>
<div class="b" style="left:5px;top:706px;width:4px;height:1px;background:#B9B5A2;"></div>
<div class="b" style="left:5px;top:708px;width:4px;height:1px;background:#B9B5A2;"></div>
<div class="b" style="left:15px;top:690px;width:1007px;height:23px;background:#FFF;border:1px solid;border-color:#ACA899 #FFF #FFF #ACA899;"></div>
<div class="b" style="left:16px;top:691px;width:1005px;height:21px;border:1px solid;border-color:#D6D2C2 #F1EFE2 #F1EFE2 #D6D2C2;"></div>
<svg style="left:20px;top:696px" width="10" height="10"><circle cx="5" cy="5" r="4" fill="#A9A9A9" stroke="#8A8A8A"/><circle cx="4" cy="4" r="1.5" fill="#D4D4D4"/></svg>
<div class="t" style="left:35px;top:694.5px;font-size:11px;line-height:15px;color:#000;font-weight:400;">Баланс: 5 000 000.00&nbsp; Прибыль: -885.69&nbsp; Средства: 4 999 114.31&nbsp; Залог: 8 044.12&nbsp; Свободно: 4 991 070.19&nbsp; Уровень: 62146.19%</div>
<div class="b" style="left:0px;top:716px;width:1024px;height:1px;background:#B5B19E;"></div>
<div class="b" style="left:0px;top:717px;width:1024px;height:1px;background:#FFFFFF;"></div>
</body></html>
